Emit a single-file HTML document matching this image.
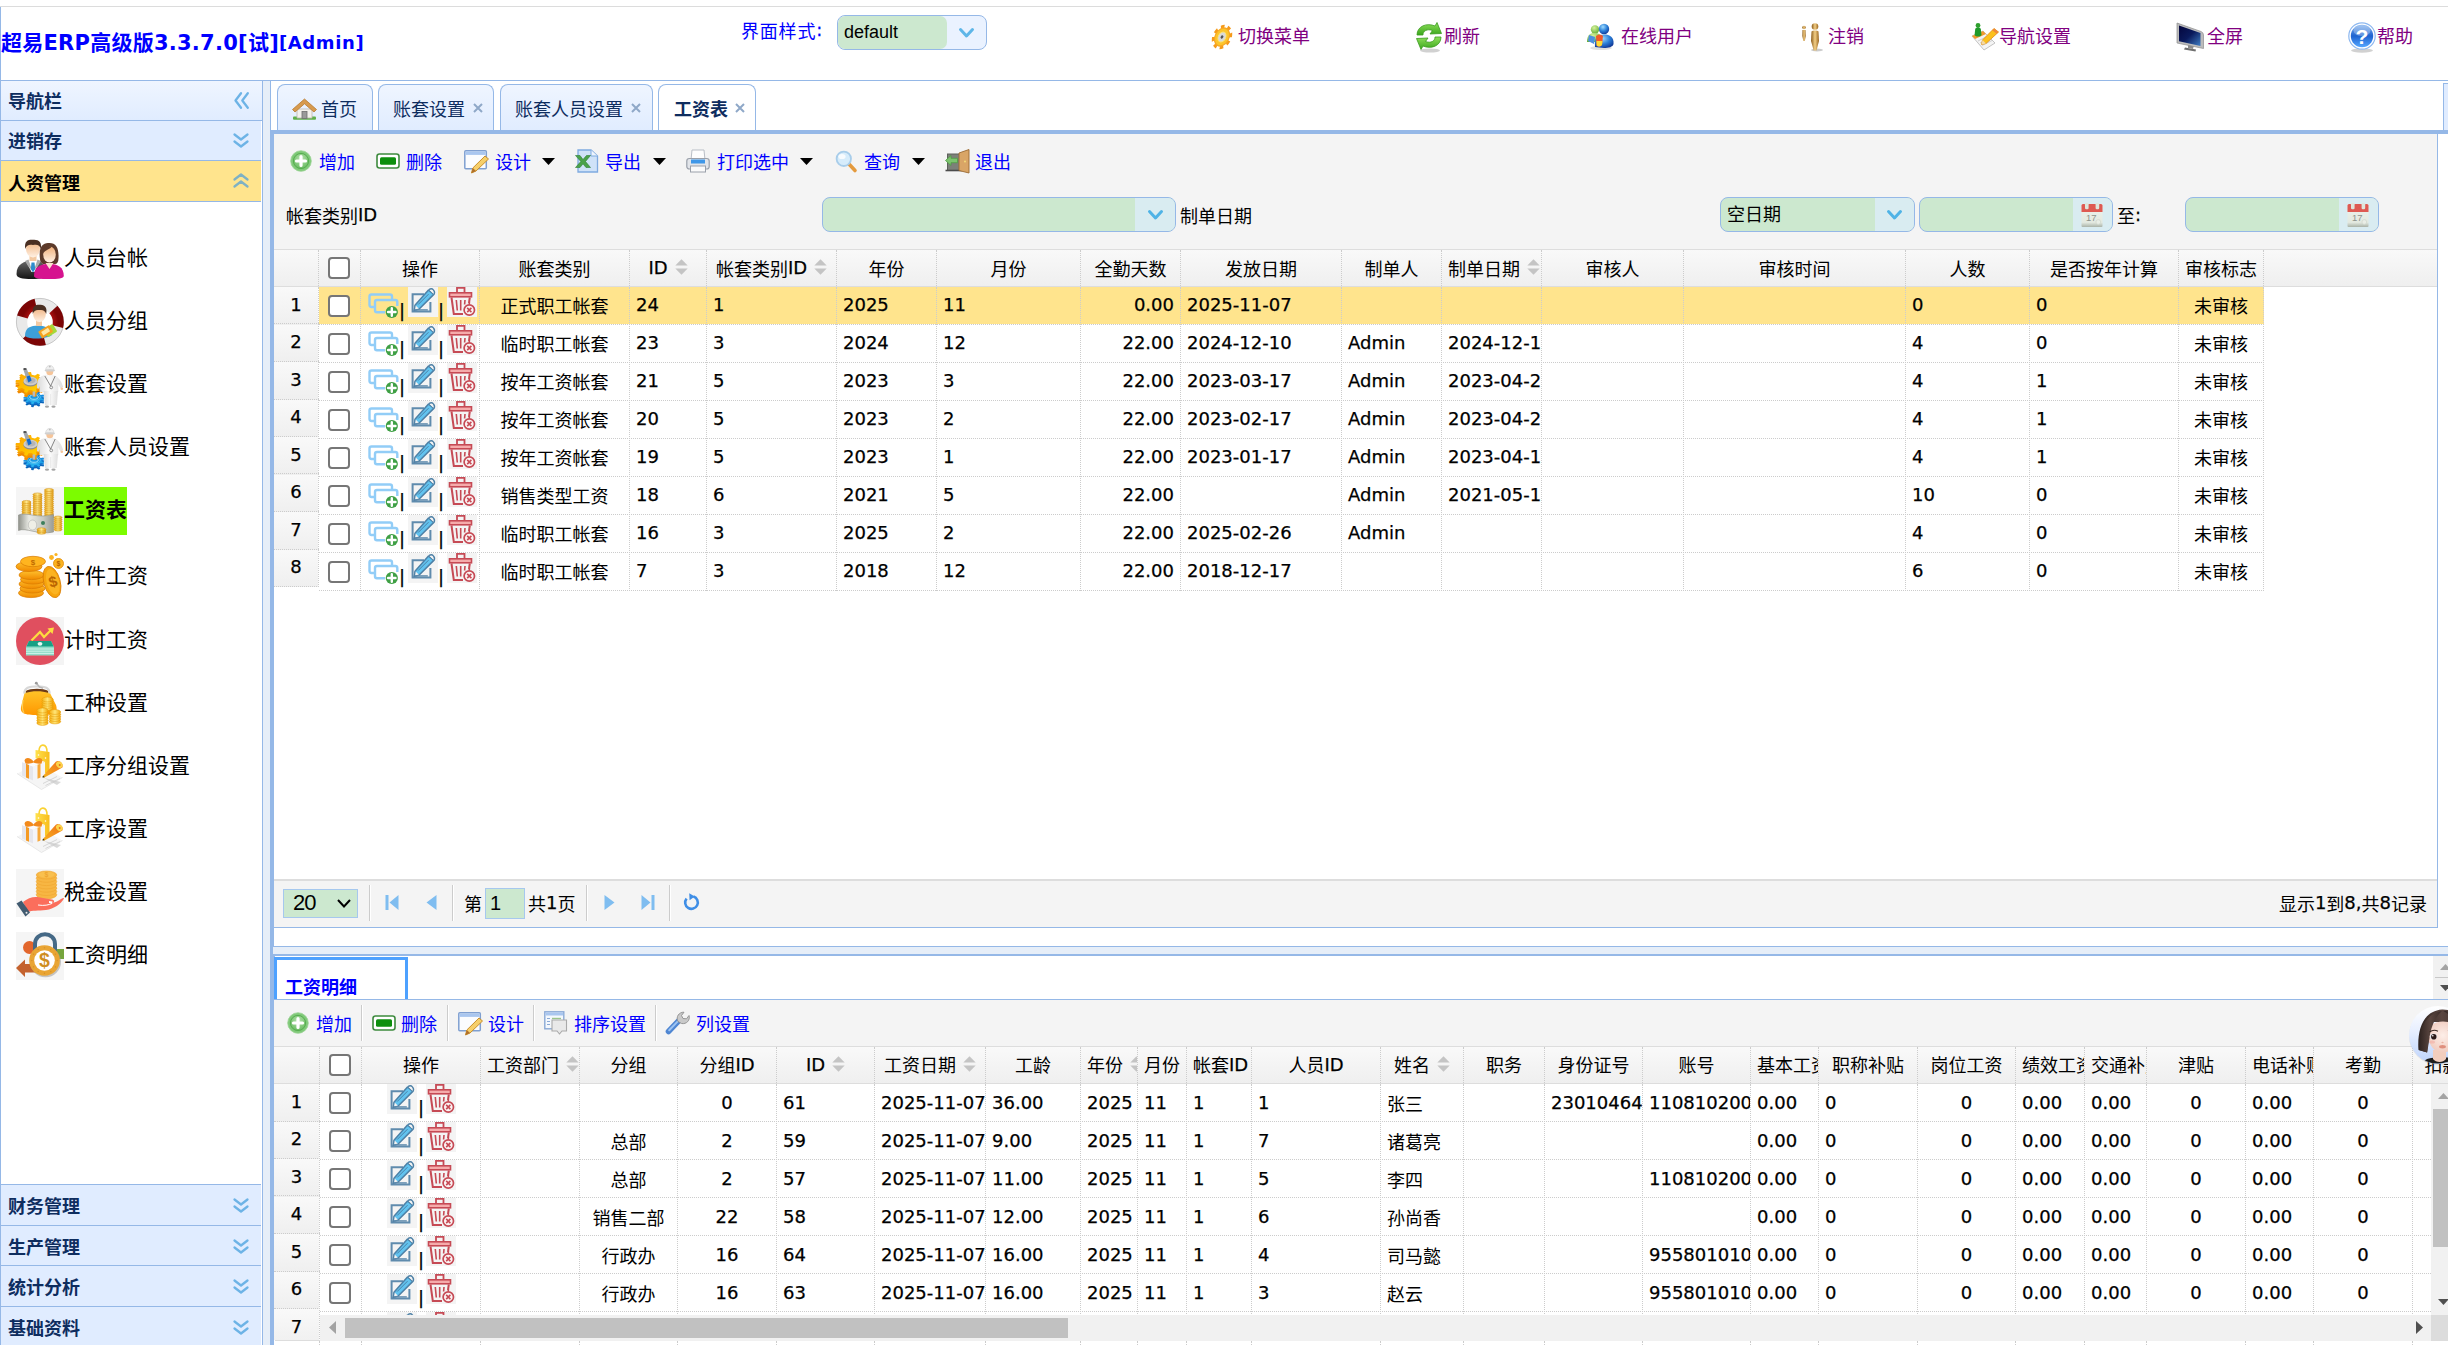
<!DOCTYPE html><html lang="zh"><head><meta charset="utf-8"><title>超易ERP</title><style>
*{box-sizing:border-box;margin:0;padding:0}
html,body{width:2448px;height:1345px;overflow:hidden;background:#fff}
body{position:relative;font-family:"DejaVu Sans","Noto Sans CJK SC",sans-serif;font-size:18px;color:#000;line-height:24px}
div{position:absolute;white-space:nowrap}
svg{position:absolute;overflow:visible}
.t{line-height:24px;height:24px}
.b{font-weight:bold}
.blue{color:#00f}
.pur{color:#800080}
.hd{background:linear-gradient(#EFF5FF,#E0ECFF);border-bottom:1px solid #95B8E7;color:#0E2D5F;font-weight:bold}
.gh{background:linear-gradient(#F9F9F9,#efefef)}
.cb{border-right:1px dotted #ccc}
.vline{width:0;border-left:1px dotted #ccc}
.hline{height:0;border-top:1px dotted #ccc}
.cell{height:24px;line-height:24px;overflow:hidden}
.ck{width:22px;height:22px;border:2px solid #767676;border-radius:4px;background:#fff}
.ar{font-family:"Liberation Sans","Noto Sans CJK SC",sans-serif}
.combo{border:1px solid #95B8E7;border-radius:8px;background:#cce8cf;overflow:hidden}
.cell,.t{-webkit-text-stroke:0.25px}
.c{position:relative;top:2px;-webkit-text-stroke:0}
.c3{position:relative;top:3px;-webkit-text-stroke:0}
.c1{position:relative;top:1px;-webkit-text-stroke:0}
.sep{width:0;border-left:1px solid #ccc;border-right:1px solid #fff}
</style></head><body>
<div style="left:0px;top:6px;width:2448px;height:1px;background:#dcdcdc"></div>
<div style="left:0px;top:7px;width:1px;height:1338px;background:#95B8E7"></div>
<div style="left:0px;top:80px;width:2448px;height:1px;background:#95B8E7"></div>
<div class="b blue" style="left:1px;top:28px;font-size:21px;line-height:30px;letter-spacing:0.25px">超易ERP高级版3.3.7.0[试]</div>
<div class="b blue" style="left:279px;top:30px;font-size:18px;line-height:26px;letter-spacing:0.6px">[Admin]</div>
<div class="t" style="left:741px;top:18px;color:#00f;letter-spacing:0.8px"><span class="c">界面样式</span>:</div>
<div class="combo" style="left:837px;top:15px;width:150px;height:35px;background:#eaf2ff"><div style="left:0;top:0;width:109px;height:33px;background:#cce8cf;border-radius:7px"></div><div class="ar" style="left:6px;top:4px;line-height:24px;font-size:18px">default</div><svg style="left:121px;top:12px" width="15" height="10" viewBox="0 0 15 10" ><path d="M1.5 1.5 L7.5 8 L13.5 1.5" fill="none" stroke="#5eb6e8" stroke-width="3" stroke-linecap="round" stroke-linejoin="round"/></svg></div>
<svg style="left:1210px;top:23px" width="24" height="28" viewBox="0 0 24 28" ><g transform="translate(12,14) rotate(28) scale(0.72,1)"><circle r="10.5" fill="none" stroke="#f59a1b" stroke-width="5" stroke-dasharray="4.2 4.05"/><circle r="9.5" fill="#fdc52b"/><circle r="9.5" fill="none" stroke="#f7a823" stroke-width="1.5"/><circle r="5.2" fill="#d9d9d9" stroke="#fbe27a" stroke-width="1"/><circle r="1.8" fill="#555"/></g></svg>
<div class="t" style="left:1238px;top:23px;color:#800080"><span class="c">切换菜单</span></div>
<svg style="left:1415px;top:22px" width="28" height="30" viewBox="0 0 28 30" ><defs><linearGradient id="rg" x1="0" y1="0" x2="0" y2="1"><stop offset="0" stop-color="#8fe05a"/><stop offset="1" stop-color="#3aa61c"/></linearGradient></defs><ellipse cx="15" cy="28.5" rx="10" ry="2" fill="#000" opacity="0.18"/><path d="M2 13 C2 4 12 0.5 20 4 L22 0.5 L26.5 11.5 L15 12 L17.5 8.5 C12 6.5 8 9 8 13 Z" fill="url(#rg)" stroke="#3a9a1e" stroke-width="0.8"/><path d="M26 15 C26 24 16 27.5 8 24 L6 27.5 L1.5 16.5 L13 16 L10.5 19.5 C16 21.5 20 19 20 15 Z" fill="url(#rg)" stroke="#3a9a1e" stroke-width="0.8"/></svg>
<div class="t" style="left:1444px;top:23px;color:#800080"><span class="c">刷新</span></div>
<svg style="left:1586px;top:22px" width="30" height="28" viewBox="0 0 30 28" ><defs><radialGradient id="ub" cx="0.4" cy="0.3" r="0.8"><stop offset="0" stop-color="#9fdcff"/><stop offset="0.5" stop-color="#2b7fd8"/><stop offset="1" stop-color="#0b2a8a"/></radialGradient><radialGradient id="ug" cx="0.4" cy="0.3" r="0.8"><stop offset="0" stop-color="#d6f29a"/><stop offset="1" stop-color="#5aa72b"/></radialGradient></defs><ellipse cx="15" cy="26" rx="11" ry="2" fill="#000" opacity="0.12"/><circle cx="9" cy="7.5" r="4.2" fill="url(#ug)"/><path d="M1 20 C1 12 5 11 9 11 C13 11 16 13 16 20 Z" fill="url(#ug)"/><circle cx="18" cy="7" r="5.2" fill="url(#ub)"/><path d="M9 25 C8 15 12 12.5 18 12.5 C24 12.5 28 15 27.5 22 C27 25 22 26 18 26 Z" fill="url(#ub)"/><path d="M3 13 L9 15 L8 22 L2 19 Z" fill="#4c8fe0"/><path d="M10 14 C13 12 15 12 17 14 L16 23 C14 25 12 25 10.5 23.5 Z" fill="#f15a29"/><path d="M10.5 19 L16.5 19 L16 23 C14 25 12 25 10.7 23.5 Z" fill="#fdd835"/></svg>
<div class="t" style="left:1621px;top:23px;color:#800080"><span class="c">在线用户</span></div>
<svg style="left:1800px;top:22px" width="24" height="30" viewBox="0 0 24 30" ><defs><linearGradient id="lg" x1="0" y1="0" x2="1" y2="0"><stop offset="0" stop-color="#8a5a1a"/><stop offset="0.5" stop-color="#f3cf86"/><stop offset="1" stop-color="#9a651f"/></linearGradient></defs><ellipse cx="17" cy="28" rx="6" ry="1.4" fill="#000" opacity="0.2"/><circle cx="4" cy="5.5" r="1.8" fill="url(#lg)"/><path d="M2.5 8 H5.5 L5.8 14 L4.8 19 H3.4 L2.3 14 Z" fill="url(#lg)"/><circle cx="15" cy="4.5" r="3.3" fill="url(#lg)"/><path d="M11.5 9.5 C13 8.3 17 8.3 18.5 9.5 L19 19 L16.5 28.5 H13.7 L11 19 Z" fill="url(#lg)"/></svg>
<div class="t" style="left:1828px;top:23px;color:#800080"><span class="c">注销</span></div>
<svg style="left:1971px;top:22px" width="29" height="30" viewBox="0 0 29 30" ><path d="M1 14 L12 9 L24 21 L13 28 Z" fill="#f4f4f4" stroke="#b5b5b5" stroke-width="0.8"/><path d="M1 14 L12 9 L15 12 L4 17 Z" fill="#f29a2e"/><path d="M7 19 L17 14 M9 21 L19 16 M11 23.5 L21 18.5" stroke="#c9c9c9" stroke-width="0.9"/><circle cx="7" cy="3.5" r="2.4" fill="#2fa12f"/><path d="M4.2 7 C5 5 9 5 9.8 7 L10.5 13 C9 15 5 15 3.6 13 Z" fill="#1f9a2a"/><path d="M23 6.5 L27.5 10 L15 21.5 L10.5 22.5 L11.5 18 Z" fill="#fbc11d" stroke="#e08a12" stroke-width="0.8"/><path d="M11.5 18 L15 21.5 L10.5 22.5 Z" fill="#f3d9a6"/><path d="M23 6.5 L27.5 10 L25.7 11.7 L21.2 8.2 Z" fill="#f0883a"/></svg>
<div class="t" style="left:1999px;top:23px;color:#800080"><span class="c">导航设置</span></div>
<svg style="left:2176px;top:22px" width="29" height="31" viewBox="0 0 29 31" ><defs><linearGradient id="sg" x1="0" y1="0" x2="1" y2="1"><stop offset="0" stop-color="#05063c"/><stop offset="0.5" stop-color="#0a1a5c"/><stop offset="1" stop-color="#3f7ec4"/></linearGradient></defs><path d="M9 25.5 L20 27.5 L19.5 29.5 L8 27.5 Z" fill="#6f6f6f"/><path d="M12 22 L18 23 L17 27 L12 26 Z" fill="#8c8c8c"/><path d="M1 1 L25 9.5 Q27.5 10.5 27.5 13 L27.5 26.5 L1 21 Z" fill="#bcbcbc" stroke="#8d8d8d" stroke-width="0.7"/><path d="M3 3.5 L24.5 11 L24.5 24 L3 19.2 Z" fill="url(#sg)"/></svg>
<div class="t" style="left:2207px;top:23px;color:#800080"><span class="c">全屏</span></div>
<svg style="left:2348px;top:22px" width="28" height="32" viewBox="0 0 28 32" ><defs><linearGradient id="hg" x1="0" y1="0" x2="0" y2="1"><stop offset="0" stop-color="#7fb0ee"/><stop offset="0.5" stop-color="#1e63d0"/><stop offset="1" stop-color="#55a6ff"/></linearGradient></defs><ellipse cx="14" cy="28.5" rx="11" ry="2.2" fill="#000" opacity="0.18"/><circle cx="14" cy="14" r="13.2" fill="#fff" stroke="#8db8f0" stroke-width="1.2"/><circle cx="14" cy="14" r="11.2" fill="url(#hg)"/><ellipse cx="14" cy="8.5" rx="8.5" ry="5.5" fill="#fff" opacity="0.28"/><text x="14" y="21.5" text-anchor="middle" font-family="Liberation Sans,sans-serif" font-weight="bold" font-size="21" fill="#fff">?</text></svg>
<div class="t" style="left:2377px;top:23px;color:#800080"><span class="c">帮助</span></div>
<div style="left:262px;top:81px;width:1px;height:1264px;background:#95B8E7"></div>
<div class="hd" style="left:1px;top:81px;width:261px;height:40px;"></div>
<div class="t" style="left:8px;top:88px;color:#0E2D5F;font-weight:bold"><span class="c">导航栏</span></div>
<svg style="left:234px;top:92px" width="16" height="17" viewBox="0 0 16 17" ><path d="M7 1.2 L1.5 8.5 L7 15.8 M13.8 1.2 L8.3 8.5 L13.8 15.8" fill="none" stroke="#6db3e6" stroke-width="2.3" stroke-linecap="round" stroke-linejoin="round"/></svg>
<div style="left:1px;top:121px;width:260px;height:40px;background:#E0ECFF;border-bottom:1px solid #95B8E7"></div>
<div class="t" style="left:8px;top:128px;color:#0E2D5F;font-weight:bold"><span class="c">进销存</span></div>
<svg style="left:233px;top:133px" width="16" height="15" viewBox="0 0 16 15" ><path d="M1.5 1.5 L8 6.5 L14.5 1.5 M1.5 8.5 L8 13.5 L14.5 8.5" fill="none" stroke="#6db3e6" stroke-width="2.3" stroke-linecap="round" stroke-linejoin="round"/></svg>
<div style="left:1px;top:161px;width:260px;height:41px;background:#ffe48d;border-bottom:1px solid #95B8E7"></div>
<div class="t" style="left:8px;top:170px;color:#000;font-weight:bold"><span class="c">人资管理</span></div>
<svg style="left:233px;top:173px" width="16" height="15" viewBox="0 0 16 15" ><path d="M1.5 6.5 L8 1.5 L14.5 6.5 M1.5 13.5 L8 8.5 L14.5 13.5" fill="none" stroke="#7fb1c4" stroke-width="2.3" stroke-linecap="round" stroke-linejoin="round"/></svg>
<svg style="left:16px;top:234px" width="48" height="48" viewBox="0 0 48 48" ><defs><linearGradient id="sk" x1="0" y1="0" x2="0" y2="1"><stop offset="0" stop-color="#f0b07a"/><stop offset="1" stop-color="#fff1e4"/></linearGradient><linearGradient id="suit" x1="0" y1="0" x2="0" y2="1"><stop offset="0" stop-color="#6b6b6b"/><stop offset="1" stop-color="#141414"/></linearGradient></defs><path d="M0.5 40 C0.5 30 8 27 17 26 C26 27 30 30 30 40 C30 44 24 45 16 45 C6 45 0.5 44 0.5 40 Z" fill="url(#suit)"/><path d="M10 27 L17 25 L24 27 L18.5 38 L15.5 38 Z" fill="#fff"/><path d="M9 27 L12.5 25.5 L16 36 L12 32 Z M25 27 L21.5 25.5 L18 36 L22 32 Z" fill="#a9a9a9"/><path d="M15.5 28.5 H18.5 L19.2 35 L17 38.5 L14.8 35 Z" fill="#2d8ccc"/><rect x="13.5" y="21" width="7" height="6" fill="#f3c9a2"/><ellipse cx="17" cy="15" rx="7" ry="8.5" fill="url(#sk)"/><path d="M9.2 15 C8 6 13 5.5 17.5 5.8 C23 5.5 26 8.5 24.8 15 C24 11 21 10 17 11 C13 10.5 10.5 11 9.2 15 Z" fill="#4a2f22"/><path d="M24 25 C22 10 29 9 33.5 9 C40 9 43 14 42.5 24 C42.5 28 41 30 39 30 L27 30 C25 29 24 27 24 25 Z" fill="#5c3a2a"/><path d="M18 42 C18 33 24 30.5 33 29.5 C42 30.5 47.8 33 47.8 42 C47.8 44.5 42 45 33 45 C24 45 18 44.5 18 42 Z" fill="#d6138f"/><path d="M29.5 29 L33.5 35 L37.5 29 Z" fill="#fbe3cf"/><ellipse cx="33.5" cy="20.5" rx="6.3" ry="8" fill="url(#sk)"/><path d="M27 19 C27 12 31 11 36 12.5 C34 15 30 16 27 19 Z" fill="#5c3a2a"/></svg>
<div style="left:64px;top:243px;font-size:21px;line-height:30px">人员台帐</div>
<svg style="left:16px;top:298px" width="48" height="48" viewBox="0 0 48 48" ><defs><radialGradient id="lr" cx="0.5" cy="0.5" r="0.5"><stop offset="0.5" stop-color="#c41616"/><stop offset="1" stop-color="#7c0505"/></radialGradient><linearGradient id="sk2" x1="0" y1="0" x2="0" y2="1"><stop offset="0" stop-color="#efb07c"/><stop offset="1" stop-color="#fff1e4"/></linearGradient></defs><circle cx="24" cy="24" r="18.3" fill="none" stroke="#e9e9e9" stroke-width="11"/><circle cx="24" cy="24" r="23.6" fill="none" stroke="#bdbdbd" stroke-width="0.8"/><circle cx="24" cy="24" r="18.3" fill="none" stroke="url(#lr)" stroke-width="11" stroke-dasharray="19.16 19.16" stroke-dashoffset="14.4"/><path d="M9 38 C9 29 15 28 22 27.5 C30 28 36 30 36 37 C32 41 14 42 9 38 Z" fill="#3d9fd8"/><rect x="20" y="22" width="6" height="6" fill="#f3c9a2"/><ellipse cx="23.5" cy="16.5" rx="6.3" ry="7.5" fill="url(#sk2)"/><path d="M16.8 16 C15.5 7 21 6.5 24 6.8 C29 6.5 31.5 10 30.2 16 C29 12.5 27 11.5 23.5 12 C20 11.5 18 12.5 16.8 16 Z" fill="#4a2f22"/><g transform="rotate(-32 31 34)"><rect x="29" y="30" width="11" height="9" rx="1" fill="#a6d93a"/><rect x="23.5" y="29" width="13" height="8" rx="1" fill="#f6a21e"/><rect x="26" y="31" width="8" height="4" fill="#fde9a8"/></g></svg>
<div style="left:64px;top:306px;font-size:21px;line-height:30px">人员分组</div>
<svg style="left:16px;top:361px" width="48" height="48" viewBox="0 0 48 48" ><defs><linearGradient id="og" x1="0" y1="0" x2="1" y2="1"><stop offset="0" stop-color="#ffa300"/><stop offset="1" stop-color="#ffd800"/></linearGradient><linearGradient id="bg2" x1="0" y1="0" x2="0" y2="1"><stop offset="0" stop-color="#0a74d4"/><stop offset="1" stop-color="#2cbcf2"/></linearGradient><linearGradient id="wh" x1="0" y1="0" x2="1" y2="0"><stop offset="0" stop-color="#d9d9d9"/><stop offset="0.45" stop-color="#fbfbfb"/><stop offset="1" stop-color="#dedede"/></linearGradient></defs><g transform="translate(18,39.7) scale(1,0.62)"><path d="M7.7 1.2 L10.2 2.4 L9.5 4.5 L6.7 3.9 L5.2 5.9 L6.3 8.4 L4.4 9.5 L2.6 7.3 L0.2 7.8 L-0.6 10.5 L-2.8 10.1 L-2.7 7.3 L-4.9 6.1 L-7.2 7.6 L-8.6 6.0 L-6.8 3.9 L-7.6 1.5 L-10.4 1.2 L-10.5 -1.0 L-7.7 -1.4 L-6.8 -3.7 L-8.8 -5.8 L-7.4 -7.5 L-5.0 -6.0 L-2.8 -7.3 L-3.0 -10.1 L-0.8 -10.5 L0.0 -7.8 L2.5 -7.4 L4.2 -9.6 L6.1 -8.6 L5.0 -6.0 L6.7 -4.1 L9.4 -4.7 L10.2 -2.6 L7.7 -1.3 Z" fill="#0a63b8"/></g><g transform="translate(18,38.1) scale(1,0.62)"><path d="M7.7 1.2 L10.2 2.4 L9.5 4.5 L6.7 3.9 L5.2 5.9 L6.3 8.4 L4.4 9.5 L2.6 7.3 L0.2 7.8 L-0.6 10.5 L-2.8 10.1 L-2.7 7.3 L-4.9 6.1 L-7.2 7.6 L-8.6 6.0 L-6.8 3.9 L-7.6 1.5 L-10.4 1.2 L-10.5 -1.0 L-7.7 -1.4 L-6.8 -3.7 L-8.8 -5.8 L-7.4 -7.5 L-5.0 -6.0 L-2.8 -7.3 L-3.0 -10.1 L-0.8 -10.5 L0.0 -7.8 L2.5 -7.4 L4.2 -9.6 L6.1 -8.6 L5.0 -6.0 L6.7 -4.1 L9.4 -4.7 L10.2 -2.6 L7.7 -1.3 Z" fill="#0e78d0"/></g><g transform="translate(18,36.5) scale(1,0.62)"><path d="M7.7 1.2 L10.2 2.4 L9.5 4.5 L6.7 3.9 L5.2 5.9 L6.3 8.4 L4.4 9.5 L2.6 7.3 L0.2 7.8 L-0.6 10.5 L-2.8 10.1 L-2.7 7.3 L-4.9 6.1 L-7.2 7.6 L-8.6 6.0 L-6.8 3.9 L-7.6 1.5 L-10.4 1.2 L-10.5 -1.0 L-7.7 -1.4 L-6.8 -3.7 L-8.8 -5.8 L-7.4 -7.5 L-5.0 -6.0 L-2.8 -7.3 L-3.0 -10.1 L-0.8 -10.5 L0.0 -7.8 L2.5 -7.4 L4.2 -9.6 L6.1 -8.6 L5.0 -6.0 L6.7 -4.1 L9.4 -4.7 L10.2 -2.6 L7.7 -1.3 Z" fill="url(#bg2)"/></g><ellipse cx="18" cy="36" rx="4.2" ry="2.3" fill="none" stroke="#9be0fa" stroke-width="1"/><ellipse cx="18" cy="36" rx="6.4" ry="3.6" fill="none" stroke="#5cc9f5" stroke-width="0.7"/><g transform="translate(14,26.0) scale(1,0.72)"><path d="M10.5 3.3 L13.4 5.4 L12.0 8.1 L8.6 6.9 L6.0 9.2 L6.8 12.8 L4.0 13.9 L2.1 10.8 L-1.4 10.9 L-3.0 14.2 L-5.9 13.2 L-5.3 9.6 L-8.1 7.5 L-11.4 8.9 L-13.0 6.4 L-10.3 4.0 L-11.0 0.5 L-14.5 -0.5 L-14.1 -3.5 L-10.4 -3.5 L-8.8 -6.6 L-10.8 -9.7 L-8.5 -11.7 L-5.7 -9.4 L-2.4 -10.7 L-2.0 -14.4 L1.0 -14.5 L1.7 -10.9 L5.0 -9.8 L7.7 -12.3 L10.1 -10.4 L8.3 -7.2 L10.1 -4.3 L13.8 -4.5 L14.4 -1.5 L11.0 -0.2 Z" fill="#f08a00"/></g><g transform="translate(14,23.7) scale(1,0.72)"><path d="M10.5 3.3 L13.4 5.4 L12.0 8.1 L8.6 6.9 L6.0 9.2 L6.8 12.8 L4.0 13.9 L2.1 10.8 L-1.4 10.9 L-3.0 14.2 L-5.9 13.2 L-5.3 9.6 L-8.1 7.5 L-11.4 8.9 L-13.0 6.4 L-10.3 4.0 L-11.0 0.5 L-14.5 -0.5 L-14.1 -3.5 L-10.4 -3.5 L-8.8 -6.6 L-10.8 -9.7 L-8.5 -11.7 L-5.7 -9.4 L-2.4 -10.7 L-2.0 -14.4 L1.0 -14.5 L1.7 -10.9 L5.0 -9.8 L7.7 -12.3 L10.1 -10.4 L8.3 -7.2 L10.1 -4.3 L13.8 -4.5 L14.4 -1.5 L11.0 -0.2 Z" fill="#f79c00"/></g><g transform="translate(14,21.5) scale(1,0.72)"><path d="M10.5 3.3 L13.4 5.4 L12.0 8.1 L8.6 6.9 L6.0 9.2 L6.8 12.8 L4.0 13.9 L2.1 10.8 L-1.4 10.9 L-3.0 14.2 L-5.9 13.2 L-5.3 9.6 L-8.1 7.5 L-11.4 8.9 L-13.0 6.4 L-10.3 4.0 L-11.0 0.5 L-14.5 -0.5 L-14.1 -3.5 L-10.4 -3.5 L-8.8 -6.6 L-10.8 -9.7 L-8.5 -11.7 L-5.7 -9.4 L-2.4 -10.7 L-2.0 -14.4 L1.0 -14.5 L1.7 -10.9 L5.0 -9.8 L7.7 -12.3 L10.1 -10.4 L8.3 -7.2 L10.1 -4.3 L13.8 -4.5 L14.4 -1.5 L11.0 -0.2 Z" fill="url(#og)"/></g><ellipse cx="14.5" cy="21.2" rx="7" ry="4.3" fill="#8d8d8d"/><ellipse cx="14.5" cy="20" rx="7" ry="4.3" fill="#cdcdcd"/><ellipse cx="14.5" cy="19.6" rx="5" ry="2.8" fill="#b5b5b5"/><path d="M7.3 8.5 L10.6 7.5 L15.2 19 L11.6 21 Z" fill="#a3a7ab"/><path d="M10.6 15.5 L13.9 14.6 L15.6 19.6 L12.4 21.6 Z" fill="#0e6ad0"/><ellipse cx="8.9" cy="8" rx="1.7" ry="1" fill="#4a4a4a"/><rect x="16.6" y="30.5" width="2.6" height="5" fill="#b9b9b9"/><path d="M21 27 C20.5 17 25 13.5 33 13.5 C41.5 13.5 45 19 47.2 26 L44.5 27.5 L42.3 23.5 L42.3 31 L23.5 31 L23.5 25 L22.5 28 Z" fill="url(#wh)"/><path d="M27.5 30 H42 L40.8 44 H29 Z" fill="url(#wh)"/><path d="M34.6 33 V44" stroke="#e3e3e3" stroke-width="0.8"/><ellipse cx="31" cy="45.6" rx="2.1" ry="1.2" fill="#a5a5a5"/><ellipse cx="37.5" cy="45.6" rx="2.1" ry="1.2" fill="#a5a5a5"/><circle cx="33.8" cy="10.8" r="3.5" fill="#f6c59a"/><path d="M29.6 9.3 C29.6 2.8 38 2.8 38 9.3 Z" fill="#efefef" stroke="#c5c5c5" stroke-width="0.5"/><ellipse cx="33.8" cy="9.4" rx="5.2" ry="1.2" fill="#d0d0d0"/><circle cx="33.8" cy="5.6" r="0.9" fill="#bdbdbd"/><path d="M28.8 15 L34.6 25 L39.2 15" fill="none" stroke="#6a6a6a" stroke-width="0.8"/><circle cx="35.2" cy="26.4" r="1.4" fill="none" stroke="#777" stroke-width="0.8"/><circle cx="45.8" cy="27.8" r="1.3" fill="#f6c59a"/></svg>
<div style="left:64px;top:369px;font-size:21px;line-height:30px">账套设置</div>
<svg style="left:16px;top:424px" width="48" height="48" viewBox="0 0 48 48" ><defs><linearGradient id="og" x1="0" y1="0" x2="1" y2="1"><stop offset="0" stop-color="#ffa300"/><stop offset="1" stop-color="#ffd800"/></linearGradient><linearGradient id="bg2" x1="0" y1="0" x2="0" y2="1"><stop offset="0" stop-color="#0a74d4"/><stop offset="1" stop-color="#2cbcf2"/></linearGradient><linearGradient id="wh" x1="0" y1="0" x2="1" y2="0"><stop offset="0" stop-color="#d9d9d9"/><stop offset="0.45" stop-color="#fbfbfb"/><stop offset="1" stop-color="#dedede"/></linearGradient></defs><g transform="translate(18,39.7) scale(1,0.62)"><path d="M7.7 1.2 L10.2 2.4 L9.5 4.5 L6.7 3.9 L5.2 5.9 L6.3 8.4 L4.4 9.5 L2.6 7.3 L0.2 7.8 L-0.6 10.5 L-2.8 10.1 L-2.7 7.3 L-4.9 6.1 L-7.2 7.6 L-8.6 6.0 L-6.8 3.9 L-7.6 1.5 L-10.4 1.2 L-10.5 -1.0 L-7.7 -1.4 L-6.8 -3.7 L-8.8 -5.8 L-7.4 -7.5 L-5.0 -6.0 L-2.8 -7.3 L-3.0 -10.1 L-0.8 -10.5 L0.0 -7.8 L2.5 -7.4 L4.2 -9.6 L6.1 -8.6 L5.0 -6.0 L6.7 -4.1 L9.4 -4.7 L10.2 -2.6 L7.7 -1.3 Z" fill="#0a63b8"/></g><g transform="translate(18,38.1) scale(1,0.62)"><path d="M7.7 1.2 L10.2 2.4 L9.5 4.5 L6.7 3.9 L5.2 5.9 L6.3 8.4 L4.4 9.5 L2.6 7.3 L0.2 7.8 L-0.6 10.5 L-2.8 10.1 L-2.7 7.3 L-4.9 6.1 L-7.2 7.6 L-8.6 6.0 L-6.8 3.9 L-7.6 1.5 L-10.4 1.2 L-10.5 -1.0 L-7.7 -1.4 L-6.8 -3.7 L-8.8 -5.8 L-7.4 -7.5 L-5.0 -6.0 L-2.8 -7.3 L-3.0 -10.1 L-0.8 -10.5 L0.0 -7.8 L2.5 -7.4 L4.2 -9.6 L6.1 -8.6 L5.0 -6.0 L6.7 -4.1 L9.4 -4.7 L10.2 -2.6 L7.7 -1.3 Z" fill="#0e78d0"/></g><g transform="translate(18,36.5) scale(1,0.62)"><path d="M7.7 1.2 L10.2 2.4 L9.5 4.5 L6.7 3.9 L5.2 5.9 L6.3 8.4 L4.4 9.5 L2.6 7.3 L0.2 7.8 L-0.6 10.5 L-2.8 10.1 L-2.7 7.3 L-4.9 6.1 L-7.2 7.6 L-8.6 6.0 L-6.8 3.9 L-7.6 1.5 L-10.4 1.2 L-10.5 -1.0 L-7.7 -1.4 L-6.8 -3.7 L-8.8 -5.8 L-7.4 -7.5 L-5.0 -6.0 L-2.8 -7.3 L-3.0 -10.1 L-0.8 -10.5 L0.0 -7.8 L2.5 -7.4 L4.2 -9.6 L6.1 -8.6 L5.0 -6.0 L6.7 -4.1 L9.4 -4.7 L10.2 -2.6 L7.7 -1.3 Z" fill="url(#bg2)"/></g><ellipse cx="18" cy="36" rx="4.2" ry="2.3" fill="none" stroke="#9be0fa" stroke-width="1"/><ellipse cx="18" cy="36" rx="6.4" ry="3.6" fill="none" stroke="#5cc9f5" stroke-width="0.7"/><g transform="translate(14,26.0) scale(1,0.72)"><path d="M10.5 3.3 L13.4 5.4 L12.0 8.1 L8.6 6.9 L6.0 9.2 L6.8 12.8 L4.0 13.9 L2.1 10.8 L-1.4 10.9 L-3.0 14.2 L-5.9 13.2 L-5.3 9.6 L-8.1 7.5 L-11.4 8.9 L-13.0 6.4 L-10.3 4.0 L-11.0 0.5 L-14.5 -0.5 L-14.1 -3.5 L-10.4 -3.5 L-8.8 -6.6 L-10.8 -9.7 L-8.5 -11.7 L-5.7 -9.4 L-2.4 -10.7 L-2.0 -14.4 L1.0 -14.5 L1.7 -10.9 L5.0 -9.8 L7.7 -12.3 L10.1 -10.4 L8.3 -7.2 L10.1 -4.3 L13.8 -4.5 L14.4 -1.5 L11.0 -0.2 Z" fill="#f08a00"/></g><g transform="translate(14,23.7) scale(1,0.72)"><path d="M10.5 3.3 L13.4 5.4 L12.0 8.1 L8.6 6.9 L6.0 9.2 L6.8 12.8 L4.0 13.9 L2.1 10.8 L-1.4 10.9 L-3.0 14.2 L-5.9 13.2 L-5.3 9.6 L-8.1 7.5 L-11.4 8.9 L-13.0 6.4 L-10.3 4.0 L-11.0 0.5 L-14.5 -0.5 L-14.1 -3.5 L-10.4 -3.5 L-8.8 -6.6 L-10.8 -9.7 L-8.5 -11.7 L-5.7 -9.4 L-2.4 -10.7 L-2.0 -14.4 L1.0 -14.5 L1.7 -10.9 L5.0 -9.8 L7.7 -12.3 L10.1 -10.4 L8.3 -7.2 L10.1 -4.3 L13.8 -4.5 L14.4 -1.5 L11.0 -0.2 Z" fill="#f79c00"/></g><g transform="translate(14,21.5) scale(1,0.72)"><path d="M10.5 3.3 L13.4 5.4 L12.0 8.1 L8.6 6.9 L6.0 9.2 L6.8 12.8 L4.0 13.9 L2.1 10.8 L-1.4 10.9 L-3.0 14.2 L-5.9 13.2 L-5.3 9.6 L-8.1 7.5 L-11.4 8.9 L-13.0 6.4 L-10.3 4.0 L-11.0 0.5 L-14.5 -0.5 L-14.1 -3.5 L-10.4 -3.5 L-8.8 -6.6 L-10.8 -9.7 L-8.5 -11.7 L-5.7 -9.4 L-2.4 -10.7 L-2.0 -14.4 L1.0 -14.5 L1.7 -10.9 L5.0 -9.8 L7.7 -12.3 L10.1 -10.4 L8.3 -7.2 L10.1 -4.3 L13.8 -4.5 L14.4 -1.5 L11.0 -0.2 Z" fill="url(#og)"/></g><ellipse cx="14.5" cy="21.2" rx="7" ry="4.3" fill="#8d8d8d"/><ellipse cx="14.5" cy="20" rx="7" ry="4.3" fill="#cdcdcd"/><ellipse cx="14.5" cy="19.6" rx="5" ry="2.8" fill="#b5b5b5"/><path d="M7.3 8.5 L10.6 7.5 L15.2 19 L11.6 21 Z" fill="#a3a7ab"/><path d="M10.6 15.5 L13.9 14.6 L15.6 19.6 L12.4 21.6 Z" fill="#0e6ad0"/><ellipse cx="8.9" cy="8" rx="1.7" ry="1" fill="#4a4a4a"/><rect x="16.6" y="30.5" width="2.6" height="5" fill="#b9b9b9"/><path d="M21 27 C20.5 17 25 13.5 33 13.5 C41.5 13.5 45 19 47.2 26 L44.5 27.5 L42.3 23.5 L42.3 31 L23.5 31 L23.5 25 L22.5 28 Z" fill="url(#wh)"/><path d="M27.5 30 H42 L40.8 44 H29 Z" fill="url(#wh)"/><path d="M34.6 33 V44" stroke="#e3e3e3" stroke-width="0.8"/><ellipse cx="31" cy="45.6" rx="2.1" ry="1.2" fill="#a5a5a5"/><ellipse cx="37.5" cy="45.6" rx="2.1" ry="1.2" fill="#a5a5a5"/><circle cx="33.8" cy="10.8" r="3.5" fill="#f6c59a"/><path d="M29.6 9.3 C29.6 2.8 38 2.8 38 9.3 Z" fill="#efefef" stroke="#c5c5c5" stroke-width="0.5"/><ellipse cx="33.8" cy="9.4" rx="5.2" ry="1.2" fill="#d0d0d0"/><circle cx="33.8" cy="5.6" r="0.9" fill="#bdbdbd"/><path d="M28.8 15 L34.6 25 L39.2 15" fill="none" stroke="#6a6a6a" stroke-width="0.8"/><circle cx="35.2" cy="26.4" r="1.4" fill="none" stroke="#777" stroke-width="0.8"/><circle cx="45.8" cy="27.8" r="1.3" fill="#f6c59a"/></svg>
<div style="left:64px;top:432px;font-size:21px;line-height:30px">账套人员设置</div>
<svg style="left:16px;top:487px" width="48" height="48" viewBox="0 0 48 48" ><defs><linearGradient id="cg" x1="0" y1="0" x2="1" y2="0"><stop offset="0" stop-color="#e5a21a"/><stop offset="0.5" stop-color="#ffe78a"/><stop offset="1" stop-color="#dd9612"/></linearGradient><linearGradient id="bill" x1="0" y1="0" x2="1" y2="0"><stop offset="0" stop-color="#8f918a"/><stop offset="0.3" stop-color="#e9eae4"/><stop offset="0.7" stop-color="#c9cbc3"/><stop offset="1" stop-color="#9a9c95"/></linearGradient></defs><rect width="48" height="48" fill="#f5f5f5"/><ellipse cx="33" cy="30.0" rx="4.6" ry="1.6" fill="url(#cg)" stroke="#d4930f" stroke-width="0.5"/><ellipse cx="33" cy="28.1" rx="4.6" ry="1.6" fill="url(#cg)" stroke="#d4930f" stroke-width="0.5"/><ellipse cx="33" cy="26.1" rx="4.6" ry="1.6" fill="url(#cg)" stroke="#d4930f" stroke-width="0.5"/><ellipse cx="33" cy="24.2" rx="4.6" ry="1.6" fill="url(#cg)" stroke="#d4930f" stroke-width="0.5"/><ellipse cx="33" cy="22.3" rx="4.6" ry="1.6" fill="url(#cg)" stroke="#d4930f" stroke-width="0.5"/><ellipse cx="33" cy="20.4" rx="4.6" ry="1.6" fill="url(#cg)" stroke="#d4930f" stroke-width="0.5"/><ellipse cx="33" cy="18.4" rx="4.6" ry="1.6" fill="url(#cg)" stroke="#d4930f" stroke-width="0.5"/><ellipse cx="33" cy="16.5" rx="4.6" ry="1.6" fill="url(#cg)" stroke="#d4930f" stroke-width="0.5"/><ellipse cx="33" cy="14.6" rx="4.6" ry="1.6" fill="url(#cg)" stroke="#d4930f" stroke-width="0.5"/><ellipse cx="33" cy="12.6" rx="4.6" ry="1.6" fill="url(#cg)" stroke="#d4930f" stroke-width="0.5"/><ellipse cx="33" cy="10.7" rx="4.6" ry="1.6" fill="url(#cg)" stroke="#d4930f" stroke-width="0.5"/><ellipse cx="33" cy="8.8" rx="4.6" ry="1.6" fill="url(#cg)" stroke="#d4930f" stroke-width="0.5"/><ellipse cx="33" cy="6.9" rx="4.6" ry="1.6" fill="url(#cg)" stroke="#d4930f" stroke-width="0.5"/><ellipse cx="33" cy="4.9" rx="4.6" ry="1.6" fill="url(#cg)" stroke="#d4930f" stroke-width="0.5"/><ellipse cx="33" cy="3.0" rx="4.6" ry="1.6" fill="url(#cg)" stroke="#d4930f" stroke-width="0.5"/><ellipse cx="21.5" cy="28.0" rx="4.6" ry="1.6" fill="url(#cg)" stroke="#d4930f" stroke-width="0.5"/><ellipse cx="21.5" cy="26.1" rx="4.6" ry="1.6" fill="url(#cg)" stroke="#d4930f" stroke-width="0.5"/><ellipse cx="21.5" cy="24.3" rx="4.6" ry="1.6" fill="url(#cg)" stroke="#d4930f" stroke-width="0.5"/><ellipse cx="21.5" cy="22.4" rx="4.6" ry="1.6" fill="url(#cg)" stroke="#d4930f" stroke-width="0.5"/><ellipse cx="21.5" cy="20.5" rx="4.6" ry="1.6" fill="url(#cg)" stroke="#d4930f" stroke-width="0.5"/><ellipse cx="21.5" cy="18.7" rx="4.6" ry="1.6" fill="url(#cg)" stroke="#d4930f" stroke-width="0.5"/><ellipse cx="21.5" cy="16.8" rx="4.6" ry="1.6" fill="url(#cg)" stroke="#d4930f" stroke-width="0.5"/><ellipse cx="21.5" cy="15.0" rx="4.6" ry="1.6" fill="url(#cg)" stroke="#d4930f" stroke-width="0.5"/><ellipse cx="21.5" cy="13.1" rx="4.6" ry="1.6" fill="url(#cg)" stroke="#d4930f" stroke-width="0.5"/><ellipse cx="21.5" cy="11.2" rx="4.6" ry="1.6" fill="url(#cg)" stroke="#d4930f" stroke-width="0.5"/><ellipse cx="21.5" cy="9.4" rx="4.6" ry="1.6" fill="url(#cg)" stroke="#d4930f" stroke-width="0.5"/><ellipse cx="21.5" cy="7.5" rx="4.6" ry="1.6" fill="url(#cg)" stroke="#d4930f" stroke-width="0.5"/><ellipse cx="10.5" cy="28.0" rx="4.6" ry="1.6" fill="url(#cg)" stroke="#d4930f" stroke-width="0.5"/><ellipse cx="10.5" cy="26.1" rx="4.6" ry="1.6" fill="url(#cg)" stroke="#d4930f" stroke-width="0.5"/><ellipse cx="10.5" cy="24.3" rx="4.6" ry="1.6" fill="url(#cg)" stroke="#d4930f" stroke-width="0.5"/><ellipse cx="10.5" cy="22.4" rx="4.6" ry="1.6" fill="url(#cg)" stroke="#d4930f" stroke-width="0.5"/><ellipse cx="10.5" cy="20.6" rx="4.6" ry="1.6" fill="url(#cg)" stroke="#d4930f" stroke-width="0.5"/><ellipse cx="10.5" cy="18.7" rx="4.6" ry="1.6" fill="url(#cg)" stroke="#d4930f" stroke-width="0.5"/><ellipse cx="10.5" cy="16.9" rx="4.6" ry="1.6" fill="url(#cg)" stroke="#d4930f" stroke-width="0.5"/><ellipse cx="10.5" cy="15.0" rx="4.6" ry="1.6" fill="url(#cg)" stroke="#d4930f" stroke-width="0.5"/><path d="M2.5 28 C10 24.5 22 32 37.5 27.5 L37.5 45 C22 48.5 10 40 2.5 43.5 Z" fill="url(#bill)" stroke="#8d8f88" stroke-width="0.6"/><ellipse cx="16.5" cy="38" rx="4.2" ry="5" fill="#efefe6" stroke="#aaa" stroke-width="0.5"/><circle cx="27" cy="36" r="2" fill="#3d7f5b"/><ellipse cx="42" cy="42.5" rx="4" ry="1.5" fill="url(#cg)" stroke="#d4930f" stroke-width="0.5"/><ellipse cx="42" cy="40.5" rx="4" ry="1.5" fill="url(#cg)" stroke="#d4930f" stroke-width="0.5"/><ellipse cx="42" cy="38.5" rx="4" ry="1.5" fill="url(#cg)" stroke="#d4930f" stroke-width="0.5"/><ellipse cx="42" cy="36.5" rx="4" ry="1.5" fill="url(#cg)" stroke="#d4930f" stroke-width="0.5"/><ellipse cx="42" cy="34.5" rx="4" ry="1.5" fill="url(#cg)" stroke="#d4930f" stroke-width="0.5"/><ellipse cx="42" cy="32.5" rx="4" ry="1.5" fill="url(#cg)" stroke="#d4930f" stroke-width="0.5"/><ellipse cx="42" cy="30.5" rx="4" ry="1.5" fill="url(#cg)" stroke="#d4930f" stroke-width="0.5"/><ellipse cx="25.5" cy="45.5" rx="4.4" ry="1.7" fill="url(#cg)" stroke="#d4930f" stroke-width="0.5"/><ellipse cx="25.5" cy="44.0" rx="4.4" ry="1.7" fill="url(#cg)" stroke="#d4930f" stroke-width="0.5"/><ellipse cx="25.5" cy="42.5" rx="4.4" ry="1.7" fill="url(#cg)" stroke="#d4930f" stroke-width="0.5"/></svg>
<div style="left:64px;top:487px;width:63px;height:48px;background:#7CFC00"></div>
<div class="b" style="left:64px;top:495px;font-size:21px;line-height:30px">工资表</div>
<svg style="left:16px;top:553px" width="48" height="48" viewBox="0 0 48 48" ><defs><linearGradient id="pg" x1="0" y1="0" x2="0" y2="1"><stop offset="0" stop-color="#ffc22e"/><stop offset="1" stop-color="#f08a00"/></linearGradient></defs><ellipse cx="15" cy="40" rx="12.5" ry="4.6" fill="url(#pg)" stroke="#d87a00" stroke-width="0.7"/><ellipse cx="16.5" cy="35.5" rx="12.5" ry="4.6" fill="url(#pg)" stroke="#d87a00" stroke-width="0.7"/><ellipse cx="15.5" cy="31" rx="12.5" ry="4.6" fill="url(#pg)" stroke="#d87a00" stroke-width="0.7"/><ellipse cx="17" cy="26.5" rx="12.5" ry="4.6" fill="url(#pg)" stroke="#d87a00" stroke-width="0.7"/><ellipse cx="15.5" cy="22" rx="12.5" ry="4.6" fill="url(#pg)" stroke="#d87a00" stroke-width="0.7"/><ellipse cx="13" cy="13.5" rx="13" ry="5" fill="url(#pg)" stroke="#d87a00" stroke-width="0.7"/><ellipse cx="17" cy="8.5" rx="12.5" ry="5.2" fill="#ffb51f" stroke="#d87a00" stroke-width="0.7"/><text x="17" y="11.5" text-anchor="middle" font-family="Liberation Sans,sans-serif" font-weight="bold" font-size="8" fill="#c06a00">$</text><g transform="rotate(-15 36 29)"><ellipse cx="36" cy="29" rx="8.2" ry="16" fill="#f7a40c" stroke="#d87a00" stroke-width="0.8"/><ellipse cx="36.8" cy="29" rx="6.2" ry="13" fill="#fbb321"/><text x="37" y="34" text-anchor="middle" font-family="Liberation Sans,sans-serif" font-weight="bold" font-size="15" fill="#b96400">$</text></g><circle cx="42.5" cy="10.5" r="5" fill="#fbb321" stroke="#e08a00" stroke-width="0.8"/><text x="42.5" y="13" text-anchor="middle" font-family="Liberation Sans,sans-serif" font-weight="bold" font-size="7" fill="#b96400">$</text><circle cx="35.5" cy="4.5" r="2.4" fill="#fbb321"/><circle cx="40" cy="1.5" r="1.6" fill="#fbb321"/></svg>
<div style="left:64px;top:561px;font-size:21px;line-height:30px">计件工资</div>
<svg style="left:16px;top:617px" width="48" height="48" viewBox="0 0 48 48" ><rect width="48" height="48" fill="#f4f4f4"/><circle cx="24" cy="24" r="24" fill="#e04f5f"/><path d="M15.5 23.5 L24 15 L28 20 L35 13" fill="none" stroke="#fddc3f" stroke-width="2.2"/><path d="M31.5 11.5 L38 10.5 L36.5 17 Z" fill="#fddc3f"/><path d="M10 38.5 H38 V30 L35 24 H13 L10 30 Z" fill="#8fdcc8"/><path d="M10 32 H38 M10 34.2 H38 M10 36.4 H38" stroke="#d8f5ee" stroke-width="0.9"/><path d="M13 24 H35 L37.5 29.5 H10.5 Z" fill="#17a085"/><ellipse cx="24" cy="26.8" rx="2.4" ry="1.9" fill="#e6faf5"/></svg>
<div style="left:64px;top:625px;font-size:21px;line-height:30px">计时工资</div>
<svg style="left:16px;top:680px" width="48" height="48" viewBox="0 0 48 48" ><defs><linearGradient id="pu" x1="0" y1="0" x2="0" y2="1"><stop offset="0" stop-color="#ffc62a"/><stop offset="1" stop-color="#ff9700"/></linearGradient><linearGradient id="cg3" x1="0" y1="0" x2="1" y2="0"><stop offset="0" stop-color="#f5ad10"/><stop offset="0.5" stop-color="#ffe678"/><stop offset="1" stop-color="#f1a306"/></linearGradient></defs><path d="M9 11 C14 9 28 9 33 11 L40 25 C42.5 33.5 38 35 22 35 C8 35 3 33.5 5.5 25 Z" fill="url(#pu)"/><path d="M7 20 C6 26 6 30 8 33" fill="none" stroke="#ffda6a" stroke-width="1.2" opacity="0.8"/><path d="M10 11 C14 8 28 8 32 11 L32 12.8 C27 10.6 15 10.6 10 12.8 Z" fill="#6b3a1a"/><path d="M8.3 13.5 C8.6 8 12.5 6.3 21 6.3 C29.5 6.3 33.4 8 33.7 13.5" fill="none" stroke="#d8d8d8" stroke-width="2.2"/><path d="M20.5 3.3 L23.5 7 L27 8.3" fill="none" stroke="#b9b9b9" stroke-width="1.5"/><circle cx="20.3" cy="3.2" r="1.4" fill="#9a9a9a"/><ellipse cx="31.5" cy="28.0" rx="5.7" ry="2.4" fill="url(#cg3)" stroke="#e59b05" stroke-width="0.5"/><ellipse cx="31.5" cy="25.9" rx="5.7" ry="2.4" fill="url(#cg3)" stroke="#e59b05" stroke-width="0.5"/><ellipse cx="31.5" cy="23.8" rx="5.7" ry="2.4" fill="url(#cg3)" stroke="#e59b05" stroke-width="0.5"/><ellipse cx="31.5" cy="21.6" rx="5.7" ry="2.4" fill="url(#cg3)" stroke="#e59b05" stroke-width="0.5"/><ellipse cx="31.5" cy="19.5" rx="5.7" ry="2.4" fill="url(#cg3)" stroke="#e59b05" stroke-width="0.5"/><ellipse cx="26.5" cy="43.0" rx="5.7" ry="2.4" fill="url(#cg3)" stroke="#e59b05" stroke-width="0.5"/><ellipse cx="26.5" cy="40.5" rx="5.7" ry="2.4" fill="url(#cg3)" stroke="#e59b05" stroke-width="0.5"/><ellipse cx="26.5" cy="38.0" rx="5.7" ry="2.4" fill="url(#cg3)" stroke="#e59b05" stroke-width="0.5"/><ellipse cx="26.5" cy="35.5" rx="5.7" ry="2.4" fill="url(#cg3)" stroke="#e59b05" stroke-width="0.5"/><ellipse cx="26.5" cy="33.0" rx="5.7" ry="2.4" fill="url(#cg3)" stroke="#e59b05" stroke-width="0.5"/><ellipse cx="26.5" cy="30.5" rx="5.7" ry="2.4" fill="url(#cg3)" stroke="#e59b05" stroke-width="0.5"/><ellipse cx="39" cy="41.5" rx="5.7" ry="2.4" fill="url(#cg3)" stroke="#e59b05" stroke-width="0.5"/><ellipse cx="39" cy="39.1" rx="5.7" ry="2.4" fill="url(#cg3)" stroke="#e59b05" stroke-width="0.5"/><ellipse cx="39" cy="36.8" rx="5.7" ry="2.4" fill="url(#cg3)" stroke="#e59b05" stroke-width="0.5"/><ellipse cx="39" cy="34.4" rx="5.7" ry="2.4" fill="url(#cg3)" stroke="#e59b05" stroke-width="0.5"/><ellipse cx="39" cy="32.0" rx="5.7" ry="2.4" fill="url(#cg3)" stroke="#e59b05" stroke-width="0.5"/></svg>
<div style="left:64px;top:688px;font-size:21px;line-height:30px">工种设置</div>
<svg style="left:16px;top:743px" width="48" height="48" viewBox="0 0 48 48" ><defs><linearGradient id="yb" x1="0" y1="0" x2="1" y2="0"><stop offset="0" stop-color="#ffe24d"/><stop offset="1" stop-color="#f8bd1c"/></linearGradient><linearGradient id="pc" x1="0" y1="1" x2="1" y2="0"><stop offset="0" stop-color="#f9b41c"/><stop offset="1" stop-color="#ef6c1a"/></linearGradient></defs><path d="M1 30.5 L22 21 L46.5 34.5 L25.5 46.5 Z" fill="#f5f5f5"/><path d="M1 30.5 L25.5 46.5 L46.5 34.5" fill="none" stroke="#e2e2e2" stroke-width="0.8"/><path d="M27 40.5 L41 33.5 M29.5 42.5 L44 35.5" stroke="#d2d2d2" stroke-width="0.9"/><path d="M28 35 L45 39 L41 42 Z" fill="#c9c9c9" opacity="0.7"/><path d="M19.5 7 L33.5 9 L33.5 31 L19.5 28 Z" fill="url(#yb)"/><path d="M23 8 C23 0 31 0 31 9" fill="none" stroke="#fad232" stroke-width="1.6"/><circle cx="22.5" cy="12" r="0.8" fill="#fff"/><circle cx="29.5" cy="15" r="0.8" fill="#fff"/><path d="M6 19 L17 23.5 L17 37.5 L6 32.5 Z" fill="#e6e6ec"/><path d="M17 23.5 L29 19 L29 32.5 L17 37.5 Z" fill="#f4f4f8"/><path d="M6 19 L18 14.5 L29 19 L17 23.5 Z" fill="#fbfbfd"/><path d="M10 20.7 L13 21.9 V35.8 L10 34.4 Z" fill="#f59a23"/><path d="M21.5 21.8 L24.5 20.7 V34.4 L21.5 35.8 Z" fill="#f7a83a"/><path d="M8.5 17.5 C10 13.5 15 15 17.5 18.5 C20 15 25 13.5 26.5 17.5 L25.5 20.5 C22 21 19.5 20.5 17.5 19.5 C15.5 20.5 13 21 9.5 20.5 Z" fill="#f28a1c"/><path d="M26.3 33.8 L39.8 18.8 C42.8 16.3 47.8 20.2 46.4 24.6 L28 34.8 Z" fill="url(#pc)"/><ellipse cx="43.6" cy="21.6" rx="3" ry="3.6" transform="rotate(-40 43.6 22)" fill="#fbd44a"/><circle cx="43.7" cy="22" r="1" fill="#e8701a"/><path d="M26 34.2 L28 32.6 L28.4 34.4 Z" fill="#333"/></svg>
<div style="left:64px;top:751px;font-size:21px;line-height:30px">工序分组设置</div>
<svg style="left:16px;top:806px" width="48" height="48" viewBox="0 0 48 48" ><defs><linearGradient id="yb" x1="0" y1="0" x2="1" y2="0"><stop offset="0" stop-color="#ffe24d"/><stop offset="1" stop-color="#f8bd1c"/></linearGradient><linearGradient id="pc" x1="0" y1="1" x2="1" y2="0"><stop offset="0" stop-color="#f9b41c"/><stop offset="1" stop-color="#ef6c1a"/></linearGradient></defs><path d="M1 30.5 L22 21 L46.5 34.5 L25.5 46.5 Z" fill="#f5f5f5"/><path d="M1 30.5 L25.5 46.5 L46.5 34.5" fill="none" stroke="#e2e2e2" stroke-width="0.8"/><path d="M27 40.5 L41 33.5 M29.5 42.5 L44 35.5" stroke="#d2d2d2" stroke-width="0.9"/><path d="M28 35 L45 39 L41 42 Z" fill="#c9c9c9" opacity="0.7"/><path d="M19.5 7 L33.5 9 L33.5 31 L19.5 28 Z" fill="url(#yb)"/><path d="M23 8 C23 0 31 0 31 9" fill="none" stroke="#fad232" stroke-width="1.6"/><circle cx="22.5" cy="12" r="0.8" fill="#fff"/><circle cx="29.5" cy="15" r="0.8" fill="#fff"/><path d="M6 19 L17 23.5 L17 37.5 L6 32.5 Z" fill="#e6e6ec"/><path d="M17 23.5 L29 19 L29 32.5 L17 37.5 Z" fill="#f4f4f8"/><path d="M6 19 L18 14.5 L29 19 L17 23.5 Z" fill="#fbfbfd"/><path d="M10 20.7 L13 21.9 V35.8 L10 34.4 Z" fill="#f59a23"/><path d="M21.5 21.8 L24.5 20.7 V34.4 L21.5 35.8 Z" fill="#f7a83a"/><path d="M8.5 17.5 C10 13.5 15 15 17.5 18.5 C20 15 25 13.5 26.5 17.5 L25.5 20.5 C22 21 19.5 20.5 17.5 19.5 C15.5 20.5 13 21 9.5 20.5 Z" fill="#f28a1c"/><path d="M26.3 33.8 L39.8 18.8 C42.8 16.3 47.8 20.2 46.4 24.6 L28 34.8 Z" fill="url(#pc)"/><ellipse cx="43.6" cy="21.6" rx="3" ry="3.6" transform="rotate(-40 43.6 22)" fill="#fbd44a"/><circle cx="43.7" cy="22" r="1" fill="#e8701a"/><path d="M26 34.2 L28 32.6 L28.4 34.4 Z" fill="#333"/></svg>
<div style="left:64px;top:814px;font-size:21px;line-height:30px">工序设置</div>
<svg style="left:16px;top:869px" width="48" height="48" viewBox="0 0 48 48" ><rect width="48" height="48" fill="#f5f5f5"/><ellipse cx="30.5" cy="25.8" rx="10.3" ry="4" fill="#f7b643" stroke="#eea52f" stroke-width="0.6"/><ellipse cx="30.5" cy="22.5" rx="10.3" ry="4" fill="#f7b643" stroke="#eea52f" stroke-width="0.6"/><ellipse cx="30.5" cy="19.2" rx="10.3" ry="4" fill="#f7b643" stroke="#eea52f" stroke-width="0.6"/><ellipse cx="30.5" cy="15.9" rx="10.3" ry="4" fill="#f7b643" stroke="#eea52f" stroke-width="0.6"/><ellipse cx="30.5" cy="12.6" rx="10.3" ry="4" fill="#f7b643" stroke="#eea52f" stroke-width="0.6"/><ellipse cx="30.5" cy="9.3" rx="10.3" ry="4" fill="#f7b643" stroke="#eea52f" stroke-width="0.6"/><ellipse cx="30.5" cy="6.0" rx="10.3" ry="4" fill="#f7b643" stroke="#eea52f" stroke-width="0.6"/><ellipse cx="30.5" cy="5.6" rx="8" ry="2.9" fill="#f9c04f"/><text x="30.5" y="8.2" text-anchor="middle" font-family="Liberation Sans,sans-serif" font-weight="bold" font-size="7" fill="#eea52f">$</text><path d="M7 33 C12 29 18 27 24 28.5 L36 30.5 C39 31 38.5 34 36 34.3 L41 32.5 C45 30 48 28 48 29.5 C45 35 38 40 30 41 C22 42 16 41 12 43 Z" fill="#fb6e5c"/><path d="M22 36 C28 37 33 36 36.3 34.3" fill="none" stroke="#fff" stroke-width="1"/><path d="M33 32 L36.5 32.5 L36 34.5 L33 34 Z" fill="#fff"/><path d="M0.5 34.5 L5.5 31.5 L14 43.5 L9.5 47.5 Z" fill="#425b70"/><circle cx="10.5" cy="43.8" r="1" fill="#e9e9e9"/></svg>
<div style="left:64px;top:877px;font-size:21px;line-height:30px">税金设置</div>
<svg style="left:16px;top:932px" width="48" height="48" viewBox="0 0 48 48" ><rect width="48" height="48" fill="#f5f5f5"/><circle cx="13.5" cy="15.5" r="6.5" fill="#e2662c"/><rect x="38" y="17" width="10" height="10" fill="#76a53d"/><path d="M0 36 L9 27.5 V32 H20 V40.5 H9 V45 Z" fill="#c4622e"/><path d="M19 23 V12 C19 -1 39 -1 39 12 V23" fill="none" stroke="#456986" stroke-width="4"/><circle cx="29.5" cy="29.8" r="15.5" fill="#9a9a9a" opacity="0.55"/><circle cx="28.5" cy="28.5" r="15.3" fill="#e9a534"/><circle cx="28.5" cy="28.5" r="12.7" fill="none" stroke="#d6902a" stroke-width="1.4" stroke-dasharray="0.1 6.5" stroke-linecap="round"/><circle cx="28.5" cy="28.5" r="10.3" fill="#fff"/><text x="28.5" y="35.3" text-anchor="middle" font-family="Liberation Sans,sans-serif" font-weight="bold" font-size="19.5" fill="#d08e1f">$</text></svg>
<div style="left:64px;top:940px;font-size:21px;line-height:30px">工资明细</div>
<div style="left:1px;top:1184px;width:260px;height:1px;background:#95B8E7"></div>
<div style="left:1px;top:1185px;width:260px;height:41px;background:#E0ECFF"></div>
<div class="t" style="left:8px;top:1193px;color:#0E2D5F;font-weight:bold"><span class="c">财务管理</span></div>
<svg style="left:233px;top:1198px" width="16" height="15" viewBox="0 0 16 15" ><path d="M1.5 1.5 L8 6.5 L14.5 1.5 M1.5 8.5 L8 13.5 L14.5 8.5" fill="none" stroke="#6db3e6" stroke-width="2.3" stroke-linecap="round" stroke-linejoin="round"/></svg>
<div style="left:1px;top:1225px;width:260px;height:1px;background:#95B8E7"></div>
<div style="left:1px;top:1226px;width:260px;height:41px;background:#E0ECFF"></div>
<div class="t" style="left:8px;top:1234px;color:#0E2D5F;font-weight:bold"><span class="c">生产管理</span></div>
<svg style="left:233px;top:1239px" width="16" height="15" viewBox="0 0 16 15" ><path d="M1.5 1.5 L8 6.5 L14.5 1.5 M1.5 8.5 L8 13.5 L14.5 8.5" fill="none" stroke="#6db3e6" stroke-width="2.3" stroke-linecap="round" stroke-linejoin="round"/></svg>
<div style="left:1px;top:1265px;width:260px;height:1px;background:#95B8E7"></div>
<div style="left:1px;top:1266px;width:260px;height:41px;background:#E0ECFF"></div>
<div class="t" style="left:8px;top:1274px;color:#0E2D5F;font-weight:bold"><span class="c">统计分析</span></div>
<svg style="left:233px;top:1279px" width="16" height="15" viewBox="0 0 16 15" ><path d="M1.5 1.5 L8 6.5 L14.5 1.5 M1.5 8.5 L8 13.5 L14.5 8.5" fill="none" stroke="#6db3e6" stroke-width="2.3" stroke-linecap="round" stroke-linejoin="round"/></svg>
<div style="left:1px;top:1306px;width:260px;height:1px;background:#95B8E7"></div>
<div style="left:1px;top:1307px;width:260px;height:41px;background:#E0ECFF"></div>
<div class="t" style="left:8px;top:1315px;color:#0E2D5F;font-weight:bold"><span class="c">基础资料</span></div>
<svg style="left:233px;top:1320px" width="16" height="15" viewBox="0 0 16 15" ><path d="M1.5 1.5 L8 6.5 L14.5 1.5 M1.5 8.5 L8 13.5 L14.5 8.5" fill="none" stroke="#6db3e6" stroke-width="2.3" stroke-linecap="round" stroke-linejoin="round"/></svg>
<div style="left:263px;top:81px;width:7px;height:1264px;background:#E6EEF8"></div>
<div style="left:270px;top:81px;width:1px;height:50px;background:#95B8E7"></div>
<div style="left:277px;top:84px;width:96px;height:47px;border:1px solid #95B8E7;border-bottom:none;border-radius:8px 8px 0 0;background:linear-gradient(#EFF5FF,#E0ECFF)"></div>
<svg style="left:292px;top:98px" width="25" height="22" viewBox="0 0 25 22" ><rect x="1" y="18.5" width="23" height="3.2" rx="1" fill="#5fb04a"/><path d="M5 11 H20 V20 H5 Z" fill="#f3f1ec" stroke="#bdb8ae" stroke-width="0.8"/><rect x="10" y="13.5" width="5" height="7" fill="#9a9a9a" stroke="#6e6e6e" stroke-width="0.8"/><path d="M12.5 1 L24.5 11.5 L22 14 L12.5 5.8 L3 14 L0.5 11.5 Z" fill="#d79a4e" stroke="#b77a2e" stroke-width="0.8"/></svg>
<div class="t" style="left:321px;top:96px;color:#0E2D5F"><span class="c">首页</span></div>
<div style="left:378px;top:84px;width:116px;height:47px;border:1px solid #95B8E7;border-bottom:none;border-radius:8px 8px 0 0;background:linear-gradient(#EFF5FF,#E0ECFF)"></div>
<div class="t" style="left:393px;top:96px;color:#0E2D5F"><span class="c">账套设置</span></div>
<div style="left:500px;top:84px;width:153px;height:47px;border:1px solid #95B8E7;border-bottom:none;border-radius:8px 8px 0 0;background:linear-gradient(#EFF5FF,#E0ECFF)"></div>
<div class="t" style="left:515px;top:96px;color:#0E2D5F"><span class="c">账套人员设置</span></div>
<div style="left:658px;top:84px;width:98px;height:47px;border:1px solid #95B8E7;border-bottom:none;border-radius:8px 8px 0 0;background:#fff"></div>
<div class="t" style="left:674px;top:96px;color:#0E2D5F;font-weight:bold"><span class="c">工资表</span></div>
<svg style="left:473px;top:103px" width="10" height="10" viewBox="0 0 10 10" ><path d="M1 1 L9 9 M9 1 L1 9" stroke="#8fa8c8" stroke-width="2"/></svg>
<svg style="left:631px;top:103px" width="10" height="10" viewBox="0 0 10 10" ><path d="M1 1 L9 9 M9 1 L1 9" stroke="#8fa8c8" stroke-width="2"/></svg>
<svg style="left:735px;top:103px" width="10" height="10" viewBox="0 0 10 10" ><path d="M1 1 L9 9 M9 1 L1 9" stroke="#8fa8c8" stroke-width="2"/></svg>
<div style="left:2443px;top:83px;width:6px;height:48px;background:#E0ECFF;border:1px solid #95B8E7;border-right:none"></div>
<div style="left:270px;top:130px;width:2178px;height:4px;background:#95B8E7"></div>
<div style="left:270px;top:134px;width:4px;height:1211px;background:#95B8E7"></div>
<div style="left:274px;top:134px;width:2163px;height:746px;background:#f4f4f4"></div>
<div style="left:2437px;top:134px;width:1px;height:794px;background:#95B8E7"></div>
<div style="left:274px;top:927px;width:2164px;height:1px;background:#95B8E7"></div>
<svg style="left:290px;top:150px" width="22" height="22" viewBox="0 0 22 22" ><defs><radialGradient id="ag" cx="0.5" cy="0.35" r="0.7"><stop offset="0" stop-color="#b7e3b0"/><stop offset="1" stop-color="#62b85a"/></radialGradient></defs><circle cx="11" cy="11" r="10.3" fill="#7fc978" stroke="#9ad394" stroke-width="0.8"/><circle cx="11" cy="11" r="7.6" fill="url(#ag)" stroke="#56ad4f" stroke-width="1"/><path d="M11 6.5 V15.5 M6.5 11 H15.5" stroke="#fff" stroke-width="3.2" stroke-linecap="round"/></svg>
<div class="t" style="left:319px;top:149px;color:#00f"><span class="c">增加</span></div>
<svg style="left:376px;top:153px" width="24" height="16" viewBox="0 0 24 16" ><rect x="1" y="1" width="22" height="14" rx="2.5" fill="#fff" stroke="#3d8a3d" stroke-width="1.6"/><rect x="4" y="4.2" width="16" height="7.6" rx="1.5" fill="#0d8f0d"/></svg>
<div class="t" style="left:406px;top:149px;color:#00f"><span class="c">删除</span></div>
<svg style="left:464px;top:150px" width="26" height="24" viewBox="0 0 26 24" ><rect x="0.8" y="0.8" width="21.5" height="18" rx="1" fill="#fbfcfe" stroke="#7f9fd0" stroke-width="1.5"/><rect x="1.5" y="1.5" width="20" height="3.4" fill="#a9c6ef"/><path d="M21 6 L24.5 9 L12 21 L7.5 23 L8.8 18 Z" fill="#f6cf6a" stroke="#c98f2b" stroke-width="1"/><path d="M8.8 18 L12 21 L7.5 23 Z" fill="#b0702a"/></svg>
<div class="t" style="left:495px;top:149px;color:#00f"><span class="c">设计</span></div>
<svg style="left:542px;top:158px" width="13" height="7" viewBox="0 0 13 7" ><path d="M0 0 H13 L6.5 7 Z" fill="#000"/></svg>
<svg style="left:575px;top:149px" width="24" height="24" viewBox="0 0 24 24" ><path d="M3 1 H16 L22.5 7 V23 H3 Z" fill="#cfe2f8" stroke="#7faae0" stroke-width="1.3"/><path d="M16 1 V7 H22.5" fill="#eef5fd" stroke="#7faae0" stroke-width="1"/><path d="M0.5 6.5 L5 6.5 L8 10.5 L11.5 6.5 L15.5 6.5 L10.5 12.5 L15.5 18.5 L11 18.5 L8 14.8 L5 18.5 L0.5 18.5 L5.8 12.5 Z" fill="#4aa24a" stroke="#2e7d32" stroke-width="0.6"/></svg>
<div class="t" style="left:605px;top:149px;color:#00f"><span class="c">导出</span></div>
<svg style="left:653px;top:158px" width="13" height="7" viewBox="0 0 13 7" ><path d="M0 0 H13 L6.5 7 Z" fill="#000"/></svg>
<svg style="left:686px;top:149px" width="24" height="24" viewBox="0 0 24 24" ><path d="M6 1 H18 L19 11 H5 Z" fill="#fdfdfd" stroke="#b9bec6" stroke-width="1"/><rect x="0.8" y="9.5" width="22.4" height="10.5" rx="2.5" fill="#e2e5ea" stroke="#9aa0aa" stroke-width="1.2"/><rect x="5" y="10.5" width="14" height="4" fill="#3f97e8"/><rect x="4.5" y="17" width="15" height="6" fill="#fafafa" stroke="#9aa0aa" stroke-width="1"/></svg>
<div class="t" style="left:717px;top:149px;color:#00f"><span class="c">打印选中</span></div>
<svg style="left:800px;top:158px" width="13" height="7" viewBox="0 0 13 7" ><path d="M0 0 H13 L6.5 7 Z" fill="#000"/></svg>
<svg style="left:835px;top:150px" width="23" height="23" viewBox="0 0 23 23" ><path d="M13.5 13.5 L20 20.5" stroke="#e49a3d" stroke-width="3.6" stroke-linecap="round"/><circle cx="8.8" cy="8.8" r="7.2" fill="#d6ecfb" stroke="#a8cdea" stroke-width="1.8"/><ellipse cx="7" cy="6.5" rx="3.6" ry="2.6" fill="#fff" opacity="0.8"/></svg>
<div class="t" style="left:864px;top:149px;color:#00f"><span class="c">查询</span></div>
<svg style="left:912px;top:158px" width="13" height="7" viewBox="0 0 13 7" ><path d="M0 0 H13 L6.5 7 Z" fill="#000"/></svg>
<svg style="left:945px;top:149px" width="25" height="25" viewBox="0 0 25 25" ><rect x="2.5" y="5" width="12" height="16.5" fill="#7c8079" stroke="#5d615b" stroke-width="1"/><path d="M0.5 21.5 H17" stroke="#4c4c4c" stroke-width="1.6"/><path d="M14 4 L24 0.5 V24 L14 21.5 Z" fill="#d9a566" stroke="#9b6a32" stroke-width="0.9"/><circle cx="20" cy="12.5" r="0.9" fill="#f7e07a"/><path d="M0.5 11.5 L6 6.5 V9.3 H12.5 V13.7 H6 V16.5 Z" fill="#7cc36e" stroke="#4e9d43" stroke-width="0.8"/></svg>
<div class="t" style="left:975px;top:149px;color:#00f"><span class="c">退出</span></div>
<div class="t" style="left:286px;top:203px;"><span class="c">帐套类别</span>ID</div>
<div class="combo" style="left:822px;top:197px;width:354px;height:35px"><div style="left:312px;top:0;width:41px;height:36px;background:#d9ecf1"></div><svg style="left:325px;top:12px" width="15" height="10" viewBox="0 0 15 10" ><path d="M1.5 1.5 L7.5 8 L13.5 1.5" fill="none" stroke="#4fb3e6" stroke-width="3" stroke-linecap="round" stroke-linejoin="round"/></svg></div>
<div class="t" style="left:1180px;top:203px;"><span class="c">制单日期</span></div>
<div class="combo" style="left:1720px;top:197px;width:195px;height:35px"><div style="left:154px;top:0;width:41px;height:36px;background:#d9ecf1"></div><div style="left:6px;top:5px;line-height:24px">空日期</div><svg style="left:166px;top:12px" width="15" height="10" viewBox="0 0 15 10" ><path d="M1.5 1.5 L7.5 8 L13.5 1.5" fill="none" stroke="#4fb3e6" stroke-width="3" stroke-linecap="round" stroke-linejoin="round"/></svg></div>
<div class="combo" style="left:1919px;top:197px;width:194px;height:35px"><div style="left:153px;top:0;width:41px;height:36px;background:#d9ecf1"></div><svg style="left:161px;top:5px" width="22" height="24" viewBox="0 0 22 24" ><defs><linearGradient id="calg" x1="0" y1="0" x2="0" y2="1"><stop offset="0" stop-color="#eef3ec"/><stop offset="0.8" stop-color="#e3e9e0"/><stop offset="1" stop-color="#aab3a8"/></linearGradient></defs><rect x="0.5" y="1" width="21" height="23" rx="1" fill="url(#calg)"/><path d="M0.5 2.5 Q0.5 1 2 1 H20 Q21.5 1 21.5 2.5 V9 H0.5 Z" fill="#de5a52"/><rect x="4" y="0" width="3.6" height="6.3" rx="1.2" fill="#dfe6dc"/><rect x="14.6" y="0" width="3.6" height="6.3" rx="1.2" fill="#dfe6dc"/><text x="10.2" y="18.2" text-anchor="middle" font-family="Liberation Sans,sans-serif" font-size="9.5" fill="#8e948c">17</text><circle cx="17.3" cy="19" r="2.4" fill="#e9eee6" stroke="#cfd6cc" stroke-width="0.7"/></svg></div>
<div class="t" style="left:2117px;top:203px;"><span class="c">至</span>:</div>
<div class="combo" style="left:2185px;top:197px;width:194px;height:35px"><div style="left:153px;top:0;width:41px;height:36px;background:#d9ecf1"></div><svg style="left:161px;top:5px" width="22" height="24" viewBox="0 0 22 24" ><defs><linearGradient id="calg" x1="0" y1="0" x2="0" y2="1"><stop offset="0" stop-color="#eef3ec"/><stop offset="0.8" stop-color="#e3e9e0"/><stop offset="1" stop-color="#aab3a8"/></linearGradient></defs><rect x="0.5" y="1" width="21" height="23" rx="1" fill="url(#calg)"/><path d="M0.5 2.5 Q0.5 1 2 1 H20 Q21.5 1 21.5 2.5 V9 H0.5 Z" fill="#de5a52"/><rect x="4" y="0" width="3.6" height="6.3" rx="1.2" fill="#dfe6dc"/><rect x="14.6" y="0" width="3.6" height="6.3" rx="1.2" fill="#dfe6dc"/><text x="10.2" y="18.2" text-anchor="middle" font-family="Liberation Sans,sans-serif" font-size="9.5" fill="#8e948c">17</text><circle cx="17.3" cy="19" r="2.4" fill="#e9eee6" stroke="#cfd6cc" stroke-width="0.7"/></svg></div>
<div class="gh" style="left:274px;top:249px;width:2163px;height:38px;border-top:1px solid #ddd;border-bottom:1px solid #ddd"></div>
<div style="left:274px;top:287px;width:2163px;height:593px;background:#fff"></div>
<div class="vline" style="left:318px;top:250px;width:0px;height:36px;"></div>
<div class="vline" style="left:360px;top:250px;width:0px;height:36px;"></div>
<div class="vline" style="left:479px;top:250px;width:0px;height:36px;"></div>
<div class="vline" style="left:629px;top:250px;width:0px;height:36px;"></div>
<div class="vline" style="left:706px;top:250px;width:0px;height:36px;"></div>
<div class="vline" style="left:836px;top:250px;width:0px;height:36px;"></div>
<div class="vline" style="left:936px;top:250px;width:0px;height:36px;"></div>
<div class="vline" style="left:1080px;top:250px;width:0px;height:36px;"></div>
<div class="vline" style="left:1180px;top:250px;width:0px;height:36px;"></div>
<div class="vline" style="left:1341px;top:250px;width:0px;height:36px;"></div>
<div class="vline" style="left:1441px;top:250px;width:0px;height:36px;"></div>
<div class="vline" style="left:1541px;top:250px;width:0px;height:36px;"></div>
<div class="vline" style="left:1683px;top:250px;width:0px;height:36px;"></div>
<div class="vline" style="left:1905px;top:250px;width:0px;height:36px;"></div>
<div class="vline" style="left:2029px;top:250px;width:0px;height:36px;"></div>
<div class="vline" style="left:2178px;top:250px;width:0px;height:36px;"></div>
<div class="vline" style="left:2263px;top:250px;width:0px;height:36px;"></div>
<div class="ck" style="left:328px;top:257px;width:22px;height:22px;"></div>
<div class="cell" style="left:361px;top:256px;width:118px;text-align:center;padding:0 6px"><span class="c">操作</span></div>
<div class="cell" style="left:480px;top:256px;width:149px;text-align:center;padding:0 6px"><span class="c">账套类别</span></div>
<div class="cell" style="left:630px;top:256px;width:76px;text-align:center;padding:0 6px">ID<span style="display:inline-block;position:relative;width:20px;height:16px;vertical-align:-1px"><svg style="left:7px;top:0px" width="13" height="16" viewBox="0 0 13 16" ><path d="M0.3 6.6 L6.5 0.2 L12.7 6.6 Z" fill="#c4c4c4"/><path d="M0.3 9.4 L6.5 15.8 L12.7 9.4 Z" fill="#c4c4c4"/></svg></span></div>
<div class="cell" style="left:707px;top:256px;width:129px;text-align:center;padding:0 6px"><span class="c">帐套类别</span>ID<span style="display:inline-block;position:relative;width:20px;height:16px;vertical-align:-1px"><svg style="left:7px;top:0px" width="13" height="16" viewBox="0 0 13 16" ><path d="M0.3 6.6 L6.5 0.2 L12.7 6.6 Z" fill="#c4c4c4"/><path d="M0.3 9.4 L6.5 15.8 L12.7 9.4 Z" fill="#c4c4c4"/></svg></span></div>
<div class="cell" style="left:837px;top:256px;width:99px;text-align:center;padding:0 6px"><span class="c">年份</span></div>
<div class="cell" style="left:937px;top:256px;width:143px;text-align:center;padding:0 6px"><span class="c">月份</span></div>
<div class="cell" style="left:1081px;top:256px;width:99px;text-align:center;padding:0 6px"><span class="c">全勤天数</span></div>
<div class="cell" style="left:1181px;top:256px;width:160px;text-align:center;padding:0 6px"><span class="c">发放日期</span></div>
<div class="cell" style="left:1342px;top:256px;width:99px;text-align:center;padding:0 6px"><span class="c">制单人</span></div>
<div class="cell" style="left:1442px;top:256px;width:99px;text-align:center;padding:0 6px"><span class="c">制单日期</span><span style="display:inline-block;position:relative;width:20px;height:16px;vertical-align:-1px"><svg style="left:7px;top:0px" width="13" height="16" viewBox="0 0 13 16" ><path d="M0.3 6.6 L6.5 0.2 L12.7 6.6 Z" fill="#c4c4c4"/><path d="M0.3 9.4 L6.5 15.8 L12.7 9.4 Z" fill="#c4c4c4"/></svg></span></div>
<div class="cell" style="left:1542px;top:256px;width:141px;text-align:center;padding:0 6px"><span class="c">审核人</span></div>
<div class="cell" style="left:1684px;top:256px;width:221px;text-align:center;padding:0 6px"><span class="c">审核时间</span></div>
<div class="cell" style="left:1906px;top:256px;width:123px;text-align:center;padding:0 6px"><span class="c">人数</span></div>
<div class="cell" style="left:2030px;top:256px;width:148px;text-align:center;padding:0 6px"><span class="c">是否按年计算</span></div>
<div class="cell" style="left:2179px;top:256px;width:84px;text-align:center;padding:0 6px"><span class="c">审核标志</span></div>
<div style="left:274px;top:287px;width:2174px;height:593px;overflow:hidden">
<div style="left:45px;top:0px;width:1945px;height:37px;background:#ffe48d"></div>
<div class="hline" style="left:45px;top:37px;width:1945px;height:0px;"></div>
<div class="hline" style="left:45px;top:75px;width:1945px;height:0px;"></div>
<div class="hline" style="left:45px;top:113px;width:1945px;height:0px;"></div>
<div class="hline" style="left:45px;top:151px;width:1945px;height:0px;"></div>
<div class="hline" style="left:45px;top:189px;width:1945px;height:0px;"></div>
<div class="hline" style="left:45px;top:227px;width:1945px;height:0px;"></div>
<div class="hline" style="left:45px;top:265px;width:1945px;height:0px;"></div>
<div class="hline" style="left:45px;top:303px;width:1945px;height:0px;"></div>
<div class="vline" style="left:86px;top:0px;width:0px;height:304px;"></div>
<div class="vline" style="left:205px;top:0px;width:0px;height:304px;"></div>
<div class="vline" style="left:355px;top:0px;width:0px;height:304px;"></div>
<div class="vline" style="left:432px;top:0px;width:0px;height:304px;"></div>
<div class="vline" style="left:562px;top:0px;width:0px;height:304px;"></div>
<div class="vline" style="left:662px;top:0px;width:0px;height:304px;"></div>
<div class="vline" style="left:806px;top:0px;width:0px;height:304px;"></div>
<div class="vline" style="left:906px;top:0px;width:0px;height:304px;"></div>
<div class="vline" style="left:1067px;top:0px;width:0px;height:304px;"></div>
<div class="vline" style="left:1167px;top:0px;width:0px;height:304px;"></div>
<div class="vline" style="left:1267px;top:0px;width:0px;height:304px;"></div>
<div class="vline" style="left:1409px;top:0px;width:0px;height:304px;"></div>
<div class="vline" style="left:1631px;top:0px;width:0px;height:304px;"></div>
<div class="vline" style="left:1755px;top:0px;width:0px;height:304px;"></div>
<div class="vline" style="left:1904px;top:0px;width:0px;height:304px;"></div>
<div class="vline" style="left:1989px;top:0px;width:0px;height:304px;"></div>
<div style="left:0px;top:0.0px;width:44px;height:37.5px;background:linear-gradient(to bottom,#F9F9F9,#efefef)"></div>
<div class="hline" style="left:0px;top:36px;width:45px;height:0px;"></div>
<div class="cell" style="left:0;top:5.5px;width:44px;text-align:center">1</div>
<div style="left:0px;top:37.5px;width:44px;height:37.5px;background:linear-gradient(to bottom,#F9F9F9,#efefef)"></div>
<div class="hline" style="left:0px;top:74px;width:45px;height:0px;"></div>
<div class="cell" style="left:0;top:43.0px;width:44px;text-align:center">2</div>
<div style="left:0px;top:75.0px;width:44px;height:37.5px;background:linear-gradient(to bottom,#F9F9F9,#efefef)"></div>
<div class="hline" style="left:0px;top:112px;width:45px;height:0px;"></div>
<div class="cell" style="left:0;top:80.5px;width:44px;text-align:center">3</div>
<div style="left:0px;top:112.5px;width:44px;height:37.5px;background:linear-gradient(to bottom,#F9F9F9,#efefef)"></div>
<div class="hline" style="left:0px;top:149px;width:45px;height:0px;"></div>
<div class="cell" style="left:0;top:118.0px;width:44px;text-align:center">4</div>
<div style="left:0px;top:150.0px;width:44px;height:37.5px;background:linear-gradient(to bottom,#F9F9F9,#efefef)"></div>
<div class="hline" style="left:0px;top:186px;width:45px;height:0px;"></div>
<div class="cell" style="left:0;top:155.5px;width:44px;text-align:center">5</div>
<div style="left:0px;top:187.5px;width:44px;height:37.5px;background:linear-gradient(to bottom,#F9F9F9,#efefef)"></div>
<div class="hline" style="left:0px;top:224px;width:45px;height:0px;"></div>
<div class="cell" style="left:0;top:193.0px;width:44px;text-align:center">6</div>
<div style="left:0px;top:225.0px;width:44px;height:37.5px;background:linear-gradient(to bottom,#F9F9F9,#efefef)"></div>
<div class="hline" style="left:0px;top:262px;width:45px;height:0px;"></div>
<div class="cell" style="left:0;top:230.5px;width:44px;text-align:center">7</div>
<div style="left:0px;top:262.5px;width:44px;height:37.5px;background:linear-gradient(to bottom,#F9F9F9,#efefef)"></div>
<div class="hline" style="left:0px;top:299px;width:45px;height:0px;"></div>
<div class="cell" style="left:0;top:268.0px;width:44px;text-align:center">8</div>
<div class="vline" style="left:44px;top:0px;width:0px;height:300.0px;"></div>
<div class="ck" style="left:54px;top:8px;width:22px;height:22px;"></div>
<svg style="left:94px;top:1px" width="31" height="31" viewBox="0 0 31 31" ><path d="M7.3 19 H3.5 Q1.5 19 1.5 17 V8.5 Q1.5 6.5 3.5 6.5 H22 Q24 6.5 24 8.5 V11.5" fill="none" stroke="#92cdf7" stroke-width="2.4"/><path d="M17 24.3 H9 Q7 24.3 7 22.3 V14 Q7 12 9 12 H27.3 Q29.3 12 29.3 14 V18" fill="none" stroke="#92cdf7" stroke-width="2.4"/><circle cx="23.8" cy="24" r="6.1" fill="#3fa045"/><path d="M23.8 20.3 V27.7 M20.1 24 H27.5" stroke="#fff" stroke-width="2.4" stroke-linecap="round"/></svg>
<div class="cell" style="left:125px;top:12px">|</div>
<svg style="left:134px;top:0px" width="30" height="30" viewBox="0 0 30 30" ><rect x="0" y="0" width="30" height="30" fill="#f4f4f4"/><path d="M16 7.3 H4.6 V24.6 H22.4 V15" fill="none" stroke="#5f8bad" stroke-width="2"/><path d="M20.5 3 L25.8 7.4 L11.2 22 L6.3 23.4 L7.2 18 Z" fill="#62c3ef" stroke="#4d80a6" stroke-width="1.5" stroke-linejoin="round"/><path d="M21 2.6 Q23.6 0.8 25.4 2.9 Q27.4 5 25.9 7.3" fill="#f4f4f4" stroke="#4d80a6" stroke-width="1.4"/><path d="M10.2 17.5 L20.5 7.2" stroke="#4d80a6" stroke-width="1"/><path d="M7.2 18 L6.3 23.4 L11.2 22" fill="#f4f4f4" stroke="#4d80a6" stroke-width="1.2" stroke-linejoin="round"/><path d="M6.5 22.9 H19.8" stroke="#5f8bad" stroke-width="1.4"/></svg>
<div class="cell" style="left:164px;top:12px">|</div>
<svg style="left:173px;top:0px" width="30" height="30" viewBox="0 0 30 30" ><rect x="0" y="0" width="30" height="30" fill="#f4f4f4"/><path d="M10 5.5 V0.8 H17.5 V5.5" fill="none" stroke="#c64a55" stroke-width="1.8"/><rect x="2.5" y="5.8" width="22" height="4" fill="#f5abab" stroke="#c64a55" stroke-width="1.6"/><path d="M4.5 10.5 L6.8 27 H16" fill="none" stroke="#c64a55" stroke-width="2"/><path d="M22.8 10.5 L22 16" fill="none" stroke="#c64a55" stroke-width="2"/><path d="M9.3 13 L10.3 23.5 M13.7 13 V23.5 M18 13 L17.6 17.5" stroke="#c64a55" stroke-width="1.6"/><path d="M22.3 15 V17.5" stroke="#c64a55" stroke-width="1.6"/><circle cx="22.3" cy="23" r="5.2" fill="#fbf3f3" stroke="#c64a55" stroke-width="1.7"/><path d="M20.2 20.9 L24.4 25.1 M24.4 20.9 L20.2 25.1" stroke="#c64a55" stroke-width="1.6"/></svg>
<div class="cell" style="left:206px;top:6px;width:149px;text-align:center;padding:0 6px"><span class="c">正式职工帐套</span></div>
<div class="cell" style="left:356px;top:6px;width:76px;text-align:left;padding:0 6px">24</div>
<div class="cell" style="left:433px;top:6px;width:129px;text-align:left;padding:0 6px">1</div>
<div class="cell" style="left:563px;top:6px;width:99px;text-align:left;padding:0 6px">2025</div>
<div class="cell" style="left:663px;top:6px;width:143px;text-align:left;padding:0 6px">11</div>
<div class="cell" style="left:807px;top:6px;width:99px;text-align:right;padding:0 6px">0.00</div>
<div class="cell" style="left:907px;top:6px;width:160px;text-align:left;padding:0 6px">2025-11-07</div>
<div class="cell" style="left:1632px;top:6px;width:123px;text-align:left;padding:0 6px">0</div>
<div class="cell" style="left:1756px;top:6px;width:148px;text-align:left;padding:0 6px">0</div>
<div class="cell" style="left:1905px;top:6px;width:84px;text-align:center;padding:0 6px"><span class="c">未审核</span></div>
<div class="ck" style="left:54px;top:46px;width:22px;height:22px;"></div>
<svg style="left:94px;top:39px" width="31" height="31" viewBox="0 0 31 31" ><path d="M7.3 19 H3.5 Q1.5 19 1.5 17 V8.5 Q1.5 6.5 3.5 6.5 H22 Q24 6.5 24 8.5 V11.5" fill="none" stroke="#92cdf7" stroke-width="2.4"/><path d="M17 24.3 H9 Q7 24.3 7 22.3 V14 Q7 12 9 12 H27.3 Q29.3 12 29.3 14 V18" fill="none" stroke="#92cdf7" stroke-width="2.4"/><circle cx="23.8" cy="24" r="6.1" fill="#3fa045"/><path d="M23.8 20.3 V27.7 M20.1 24 H27.5" stroke="#fff" stroke-width="2.4" stroke-linecap="round"/></svg>
<div class="cell" style="left:125px;top:50px">|</div>
<svg style="left:134px;top:38px" width="30" height="30" viewBox="0 0 30 30" ><rect x="0" y="0" width="30" height="30" fill="#f4f4f4"/><path d="M16 7.3 H4.6 V24.6 H22.4 V15" fill="none" stroke="#5f8bad" stroke-width="2"/><path d="M20.5 3 L25.8 7.4 L11.2 22 L6.3 23.4 L7.2 18 Z" fill="#62c3ef" stroke="#4d80a6" stroke-width="1.5" stroke-linejoin="round"/><path d="M21 2.6 Q23.6 0.8 25.4 2.9 Q27.4 5 25.9 7.3" fill="#f4f4f4" stroke="#4d80a6" stroke-width="1.4"/><path d="M10.2 17.5 L20.5 7.2" stroke="#4d80a6" stroke-width="1"/><path d="M7.2 18 L6.3 23.4 L11.2 22" fill="#f4f4f4" stroke="#4d80a6" stroke-width="1.2" stroke-linejoin="round"/><path d="M6.5 22.9 H19.8" stroke="#5f8bad" stroke-width="1.4"/></svg>
<div class="cell" style="left:164px;top:50px">|</div>
<svg style="left:173px;top:38px" width="30" height="30" viewBox="0 0 30 30" ><rect x="0" y="0" width="30" height="30" fill="#f4f4f4"/><path d="M10 5.5 V0.8 H17.5 V5.5" fill="none" stroke="#c64a55" stroke-width="1.8"/><rect x="2.5" y="5.8" width="22" height="4" fill="#f5abab" stroke="#c64a55" stroke-width="1.6"/><path d="M4.5 10.5 L6.8 27 H16" fill="none" stroke="#c64a55" stroke-width="2"/><path d="M22.8 10.5 L22 16" fill="none" stroke="#c64a55" stroke-width="2"/><path d="M9.3 13 L10.3 23.5 M13.7 13 V23.5 M18 13 L17.6 17.5" stroke="#c64a55" stroke-width="1.6"/><path d="M22.3 15 V17.5" stroke="#c64a55" stroke-width="1.6"/><circle cx="22.3" cy="23" r="5.2" fill="#fbf3f3" stroke="#c64a55" stroke-width="1.7"/><path d="M20.2 20.9 L24.4 25.1 M24.4 20.9 L20.2 25.1" stroke="#c64a55" stroke-width="1.6"/></svg>
<div class="cell" style="left:206px;top:44px;width:149px;text-align:center;padding:0 6px"><span class="c">临时职工帐套</span></div>
<div class="cell" style="left:356px;top:44px;width:76px;text-align:left;padding:0 6px">23</div>
<div class="cell" style="left:433px;top:44px;width:129px;text-align:left;padding:0 6px">3</div>
<div class="cell" style="left:563px;top:44px;width:99px;text-align:left;padding:0 6px">2024</div>
<div class="cell" style="left:663px;top:44px;width:143px;text-align:left;padding:0 6px">12</div>
<div class="cell" style="left:807px;top:44px;width:99px;text-align:right;padding:0 6px">22.00</div>
<div class="cell" style="left:907px;top:44px;width:160px;text-align:left;padding:0 6px">2024-12-10</div>
<div class="cell" style="left:1068px;top:44px;width:99px;text-align:left;padding:0 6px">Admin</div>
<div class="cell" style="left:1168px;top:44px;width:99px;text-align:left;padding:0 6px">2024-12-10 16:08:22</div>
<div class="cell" style="left:1632px;top:44px;width:123px;text-align:left;padding:0 6px">4</div>
<div class="cell" style="left:1756px;top:44px;width:148px;text-align:left;padding:0 6px">0</div>
<div class="cell" style="left:1905px;top:44px;width:84px;text-align:center;padding:0 6px"><span class="c">未审核</span></div>
<div class="ck" style="left:54px;top:84px;width:22px;height:22px;"></div>
<svg style="left:94px;top:77px" width="31" height="31" viewBox="0 0 31 31" ><path d="M7.3 19 H3.5 Q1.5 19 1.5 17 V8.5 Q1.5 6.5 3.5 6.5 H22 Q24 6.5 24 8.5 V11.5" fill="none" stroke="#92cdf7" stroke-width="2.4"/><path d="M17 24.3 H9 Q7 24.3 7 22.3 V14 Q7 12 9 12 H27.3 Q29.3 12 29.3 14 V18" fill="none" stroke="#92cdf7" stroke-width="2.4"/><circle cx="23.8" cy="24" r="6.1" fill="#3fa045"/><path d="M23.8 20.3 V27.7 M20.1 24 H27.5" stroke="#fff" stroke-width="2.4" stroke-linecap="round"/></svg>
<div class="cell" style="left:125px;top:88px">|</div>
<svg style="left:134px;top:76px" width="30" height="30" viewBox="0 0 30 30" ><rect x="0" y="0" width="30" height="30" fill="#f4f4f4"/><path d="M16 7.3 H4.6 V24.6 H22.4 V15" fill="none" stroke="#5f8bad" stroke-width="2"/><path d="M20.5 3 L25.8 7.4 L11.2 22 L6.3 23.4 L7.2 18 Z" fill="#62c3ef" stroke="#4d80a6" stroke-width="1.5" stroke-linejoin="round"/><path d="M21 2.6 Q23.6 0.8 25.4 2.9 Q27.4 5 25.9 7.3" fill="#f4f4f4" stroke="#4d80a6" stroke-width="1.4"/><path d="M10.2 17.5 L20.5 7.2" stroke="#4d80a6" stroke-width="1"/><path d="M7.2 18 L6.3 23.4 L11.2 22" fill="#f4f4f4" stroke="#4d80a6" stroke-width="1.2" stroke-linejoin="round"/><path d="M6.5 22.9 H19.8" stroke="#5f8bad" stroke-width="1.4"/></svg>
<div class="cell" style="left:164px;top:88px">|</div>
<svg style="left:173px;top:76px" width="30" height="30" viewBox="0 0 30 30" ><rect x="0" y="0" width="30" height="30" fill="#f4f4f4"/><path d="M10 5.5 V0.8 H17.5 V5.5" fill="none" stroke="#c64a55" stroke-width="1.8"/><rect x="2.5" y="5.8" width="22" height="4" fill="#f5abab" stroke="#c64a55" stroke-width="1.6"/><path d="M4.5 10.5 L6.8 27 H16" fill="none" stroke="#c64a55" stroke-width="2"/><path d="M22.8 10.5 L22 16" fill="none" stroke="#c64a55" stroke-width="2"/><path d="M9.3 13 L10.3 23.5 M13.7 13 V23.5 M18 13 L17.6 17.5" stroke="#c64a55" stroke-width="1.6"/><path d="M22.3 15 V17.5" stroke="#c64a55" stroke-width="1.6"/><circle cx="22.3" cy="23" r="5.2" fill="#fbf3f3" stroke="#c64a55" stroke-width="1.7"/><path d="M20.2 20.9 L24.4 25.1 M24.4 20.9 L20.2 25.1" stroke="#c64a55" stroke-width="1.6"/></svg>
<div class="cell" style="left:206px;top:82px;width:149px;text-align:center;padding:0 6px"><span class="c">按年工资帐套</span></div>
<div class="cell" style="left:356px;top:82px;width:76px;text-align:left;padding:0 6px">21</div>
<div class="cell" style="left:433px;top:82px;width:129px;text-align:left;padding:0 6px">5</div>
<div class="cell" style="left:563px;top:82px;width:99px;text-align:left;padding:0 6px">2023</div>
<div class="cell" style="left:663px;top:82px;width:143px;text-align:left;padding:0 6px">3</div>
<div class="cell" style="left:807px;top:82px;width:99px;text-align:right;padding:0 6px">22.00</div>
<div class="cell" style="left:907px;top:82px;width:160px;text-align:left;padding:0 6px">2023-03-17</div>
<div class="cell" style="left:1068px;top:82px;width:99px;text-align:left;padding:0 6px">Admin</div>
<div class="cell" style="left:1168px;top:82px;width:99px;text-align:left;padding:0 6px">2023-04-20 10:31:05</div>
<div class="cell" style="left:1632px;top:82px;width:123px;text-align:left;padding:0 6px">4</div>
<div class="cell" style="left:1756px;top:82px;width:148px;text-align:left;padding:0 6px">1</div>
<div class="cell" style="left:1905px;top:82px;width:84px;text-align:center;padding:0 6px"><span class="c">未审核</span></div>
<div class="ck" style="left:54px;top:122px;width:22px;height:22px;"></div>
<svg style="left:94px;top:115px" width="31" height="31" viewBox="0 0 31 31" ><path d="M7.3 19 H3.5 Q1.5 19 1.5 17 V8.5 Q1.5 6.5 3.5 6.5 H22 Q24 6.5 24 8.5 V11.5" fill="none" stroke="#92cdf7" stroke-width="2.4"/><path d="M17 24.3 H9 Q7 24.3 7 22.3 V14 Q7 12 9 12 H27.3 Q29.3 12 29.3 14 V18" fill="none" stroke="#92cdf7" stroke-width="2.4"/><circle cx="23.8" cy="24" r="6.1" fill="#3fa045"/><path d="M23.8 20.3 V27.7 M20.1 24 H27.5" stroke="#fff" stroke-width="2.4" stroke-linecap="round"/></svg>
<div class="cell" style="left:125px;top:126px">|</div>
<svg style="left:134px;top:114px" width="30" height="30" viewBox="0 0 30 30" ><rect x="0" y="0" width="30" height="30" fill="#f4f4f4"/><path d="M16 7.3 H4.6 V24.6 H22.4 V15" fill="none" stroke="#5f8bad" stroke-width="2"/><path d="M20.5 3 L25.8 7.4 L11.2 22 L6.3 23.4 L7.2 18 Z" fill="#62c3ef" stroke="#4d80a6" stroke-width="1.5" stroke-linejoin="round"/><path d="M21 2.6 Q23.6 0.8 25.4 2.9 Q27.4 5 25.9 7.3" fill="#f4f4f4" stroke="#4d80a6" stroke-width="1.4"/><path d="M10.2 17.5 L20.5 7.2" stroke="#4d80a6" stroke-width="1"/><path d="M7.2 18 L6.3 23.4 L11.2 22" fill="#f4f4f4" stroke="#4d80a6" stroke-width="1.2" stroke-linejoin="round"/><path d="M6.5 22.9 H19.8" stroke="#5f8bad" stroke-width="1.4"/></svg>
<div class="cell" style="left:164px;top:126px">|</div>
<svg style="left:173px;top:114px" width="30" height="30" viewBox="0 0 30 30" ><rect x="0" y="0" width="30" height="30" fill="#f4f4f4"/><path d="M10 5.5 V0.8 H17.5 V5.5" fill="none" stroke="#c64a55" stroke-width="1.8"/><rect x="2.5" y="5.8" width="22" height="4" fill="#f5abab" stroke="#c64a55" stroke-width="1.6"/><path d="M4.5 10.5 L6.8 27 H16" fill="none" stroke="#c64a55" stroke-width="2"/><path d="M22.8 10.5 L22 16" fill="none" stroke="#c64a55" stroke-width="2"/><path d="M9.3 13 L10.3 23.5 M13.7 13 V23.5 M18 13 L17.6 17.5" stroke="#c64a55" stroke-width="1.6"/><path d="M22.3 15 V17.5" stroke="#c64a55" stroke-width="1.6"/><circle cx="22.3" cy="23" r="5.2" fill="#fbf3f3" stroke="#c64a55" stroke-width="1.7"/><path d="M20.2 20.9 L24.4 25.1 M24.4 20.9 L20.2 25.1" stroke="#c64a55" stroke-width="1.6"/></svg>
<div class="cell" style="left:206px;top:120px;width:149px;text-align:center;padding:0 6px"><span class="c">按年工资帐套</span></div>
<div class="cell" style="left:356px;top:120px;width:76px;text-align:left;padding:0 6px">20</div>
<div class="cell" style="left:433px;top:120px;width:129px;text-align:left;padding:0 6px">5</div>
<div class="cell" style="left:563px;top:120px;width:99px;text-align:left;padding:0 6px">2023</div>
<div class="cell" style="left:663px;top:120px;width:143px;text-align:left;padding:0 6px">2</div>
<div class="cell" style="left:807px;top:120px;width:99px;text-align:right;padding:0 6px">22.00</div>
<div class="cell" style="left:907px;top:120px;width:160px;text-align:left;padding:0 6px">2023-02-17</div>
<div class="cell" style="left:1068px;top:120px;width:99px;text-align:left;padding:0 6px">Admin</div>
<div class="cell" style="left:1168px;top:120px;width:99px;text-align:left;padding:0 6px">2023-04-20 10:30:41</div>
<div class="cell" style="left:1632px;top:120px;width:123px;text-align:left;padding:0 6px">4</div>
<div class="cell" style="left:1756px;top:120px;width:148px;text-align:left;padding:0 6px">1</div>
<div class="cell" style="left:1905px;top:120px;width:84px;text-align:center;padding:0 6px"><span class="c">未审核</span></div>
<div class="ck" style="left:54px;top:160px;width:22px;height:22px;"></div>
<svg style="left:94px;top:153px" width="31" height="31" viewBox="0 0 31 31" ><path d="M7.3 19 H3.5 Q1.5 19 1.5 17 V8.5 Q1.5 6.5 3.5 6.5 H22 Q24 6.5 24 8.5 V11.5" fill="none" stroke="#92cdf7" stroke-width="2.4"/><path d="M17 24.3 H9 Q7 24.3 7 22.3 V14 Q7 12 9 12 H27.3 Q29.3 12 29.3 14 V18" fill="none" stroke="#92cdf7" stroke-width="2.4"/><circle cx="23.8" cy="24" r="6.1" fill="#3fa045"/><path d="M23.8 20.3 V27.7 M20.1 24 H27.5" stroke="#fff" stroke-width="2.4" stroke-linecap="round"/></svg>
<div class="cell" style="left:125px;top:164px">|</div>
<svg style="left:134px;top:152px" width="30" height="30" viewBox="0 0 30 30" ><rect x="0" y="0" width="30" height="30" fill="#f4f4f4"/><path d="M16 7.3 H4.6 V24.6 H22.4 V15" fill="none" stroke="#5f8bad" stroke-width="2"/><path d="M20.5 3 L25.8 7.4 L11.2 22 L6.3 23.4 L7.2 18 Z" fill="#62c3ef" stroke="#4d80a6" stroke-width="1.5" stroke-linejoin="round"/><path d="M21 2.6 Q23.6 0.8 25.4 2.9 Q27.4 5 25.9 7.3" fill="#f4f4f4" stroke="#4d80a6" stroke-width="1.4"/><path d="M10.2 17.5 L20.5 7.2" stroke="#4d80a6" stroke-width="1"/><path d="M7.2 18 L6.3 23.4 L11.2 22" fill="#f4f4f4" stroke="#4d80a6" stroke-width="1.2" stroke-linejoin="round"/><path d="M6.5 22.9 H19.8" stroke="#5f8bad" stroke-width="1.4"/></svg>
<div class="cell" style="left:164px;top:164px">|</div>
<svg style="left:173px;top:152px" width="30" height="30" viewBox="0 0 30 30" ><rect x="0" y="0" width="30" height="30" fill="#f4f4f4"/><path d="M10 5.5 V0.8 H17.5 V5.5" fill="none" stroke="#c64a55" stroke-width="1.8"/><rect x="2.5" y="5.8" width="22" height="4" fill="#f5abab" stroke="#c64a55" stroke-width="1.6"/><path d="M4.5 10.5 L6.8 27 H16" fill="none" stroke="#c64a55" stroke-width="2"/><path d="M22.8 10.5 L22 16" fill="none" stroke="#c64a55" stroke-width="2"/><path d="M9.3 13 L10.3 23.5 M13.7 13 V23.5 M18 13 L17.6 17.5" stroke="#c64a55" stroke-width="1.6"/><path d="M22.3 15 V17.5" stroke="#c64a55" stroke-width="1.6"/><circle cx="22.3" cy="23" r="5.2" fill="#fbf3f3" stroke="#c64a55" stroke-width="1.7"/><path d="M20.2 20.9 L24.4 25.1 M24.4 20.9 L20.2 25.1" stroke="#c64a55" stroke-width="1.6"/></svg>
<div class="cell" style="left:206px;top:158px;width:149px;text-align:center;padding:0 6px"><span class="c">按年工资帐套</span></div>
<div class="cell" style="left:356px;top:158px;width:76px;text-align:left;padding:0 6px">19</div>
<div class="cell" style="left:433px;top:158px;width:129px;text-align:left;padding:0 6px">5</div>
<div class="cell" style="left:563px;top:158px;width:99px;text-align:left;padding:0 6px">2023</div>
<div class="cell" style="left:663px;top:158px;width:143px;text-align:left;padding:0 6px">1</div>
<div class="cell" style="left:807px;top:158px;width:99px;text-align:right;padding:0 6px">22.00</div>
<div class="cell" style="left:907px;top:158px;width:160px;text-align:left;padding:0 6px">2023-01-17</div>
<div class="cell" style="left:1068px;top:158px;width:99px;text-align:left;padding:0 6px">Admin</div>
<div class="cell" style="left:1168px;top:158px;width:99px;text-align:left;padding:0 6px">2023-04-19 17:22:10</div>
<div class="cell" style="left:1632px;top:158px;width:123px;text-align:left;padding:0 6px">4</div>
<div class="cell" style="left:1756px;top:158px;width:148px;text-align:left;padding:0 6px">1</div>
<div class="cell" style="left:1905px;top:158px;width:84px;text-align:center;padding:0 6px"><span class="c">未审核</span></div>
<div class="ck" style="left:54px;top:198px;width:22px;height:22px;"></div>
<svg style="left:94px;top:191px" width="31" height="31" viewBox="0 0 31 31" ><path d="M7.3 19 H3.5 Q1.5 19 1.5 17 V8.5 Q1.5 6.5 3.5 6.5 H22 Q24 6.5 24 8.5 V11.5" fill="none" stroke="#92cdf7" stroke-width="2.4"/><path d="M17 24.3 H9 Q7 24.3 7 22.3 V14 Q7 12 9 12 H27.3 Q29.3 12 29.3 14 V18" fill="none" stroke="#92cdf7" stroke-width="2.4"/><circle cx="23.8" cy="24" r="6.1" fill="#3fa045"/><path d="M23.8 20.3 V27.7 M20.1 24 H27.5" stroke="#fff" stroke-width="2.4" stroke-linecap="round"/></svg>
<div class="cell" style="left:125px;top:202px">|</div>
<svg style="left:134px;top:190px" width="30" height="30" viewBox="0 0 30 30" ><rect x="0" y="0" width="30" height="30" fill="#f4f4f4"/><path d="M16 7.3 H4.6 V24.6 H22.4 V15" fill="none" stroke="#5f8bad" stroke-width="2"/><path d="M20.5 3 L25.8 7.4 L11.2 22 L6.3 23.4 L7.2 18 Z" fill="#62c3ef" stroke="#4d80a6" stroke-width="1.5" stroke-linejoin="round"/><path d="M21 2.6 Q23.6 0.8 25.4 2.9 Q27.4 5 25.9 7.3" fill="#f4f4f4" stroke="#4d80a6" stroke-width="1.4"/><path d="M10.2 17.5 L20.5 7.2" stroke="#4d80a6" stroke-width="1"/><path d="M7.2 18 L6.3 23.4 L11.2 22" fill="#f4f4f4" stroke="#4d80a6" stroke-width="1.2" stroke-linejoin="round"/><path d="M6.5 22.9 H19.8" stroke="#5f8bad" stroke-width="1.4"/></svg>
<div class="cell" style="left:164px;top:202px">|</div>
<svg style="left:173px;top:190px" width="30" height="30" viewBox="0 0 30 30" ><rect x="0" y="0" width="30" height="30" fill="#f4f4f4"/><path d="M10 5.5 V0.8 H17.5 V5.5" fill="none" stroke="#c64a55" stroke-width="1.8"/><rect x="2.5" y="5.8" width="22" height="4" fill="#f5abab" stroke="#c64a55" stroke-width="1.6"/><path d="M4.5 10.5 L6.8 27 H16" fill="none" stroke="#c64a55" stroke-width="2"/><path d="M22.8 10.5 L22 16" fill="none" stroke="#c64a55" stroke-width="2"/><path d="M9.3 13 L10.3 23.5 M13.7 13 V23.5 M18 13 L17.6 17.5" stroke="#c64a55" stroke-width="1.6"/><path d="M22.3 15 V17.5" stroke="#c64a55" stroke-width="1.6"/><circle cx="22.3" cy="23" r="5.2" fill="#fbf3f3" stroke="#c64a55" stroke-width="1.7"/><path d="M20.2 20.9 L24.4 25.1 M24.4 20.9 L20.2 25.1" stroke="#c64a55" stroke-width="1.6"/></svg>
<div class="cell" style="left:206px;top:196px;width:149px;text-align:center;padding:0 6px"><span class="c">销售类型工资</span></div>
<div class="cell" style="left:356px;top:196px;width:76px;text-align:left;padding:0 6px">18</div>
<div class="cell" style="left:433px;top:196px;width:129px;text-align:left;padding:0 6px">6</div>
<div class="cell" style="left:563px;top:196px;width:99px;text-align:left;padding:0 6px">2021</div>
<div class="cell" style="left:663px;top:196px;width:143px;text-align:left;padding:0 6px">5</div>
<div class="cell" style="left:807px;top:196px;width:99px;text-align:right;padding:0 6px">22.00</div>
<div class="cell" style="left:1068px;top:196px;width:99px;text-align:left;padding:0 6px">Admin</div>
<div class="cell" style="left:1168px;top:196px;width:99px;text-align:left;padding:0 6px">2021-05-18 09:15:47</div>
<div class="cell" style="left:1632px;top:196px;width:123px;text-align:left;padding:0 6px">10</div>
<div class="cell" style="left:1756px;top:196px;width:148px;text-align:left;padding:0 6px">0</div>
<div class="cell" style="left:1905px;top:196px;width:84px;text-align:center;padding:0 6px"><span class="c">未审核</span></div>
<div class="ck" style="left:54px;top:236px;width:22px;height:22px;"></div>
<svg style="left:94px;top:229px" width="31" height="31" viewBox="0 0 31 31" ><path d="M7.3 19 H3.5 Q1.5 19 1.5 17 V8.5 Q1.5 6.5 3.5 6.5 H22 Q24 6.5 24 8.5 V11.5" fill="none" stroke="#92cdf7" stroke-width="2.4"/><path d="M17 24.3 H9 Q7 24.3 7 22.3 V14 Q7 12 9 12 H27.3 Q29.3 12 29.3 14 V18" fill="none" stroke="#92cdf7" stroke-width="2.4"/><circle cx="23.8" cy="24" r="6.1" fill="#3fa045"/><path d="M23.8 20.3 V27.7 M20.1 24 H27.5" stroke="#fff" stroke-width="2.4" stroke-linecap="round"/></svg>
<div class="cell" style="left:125px;top:240px">|</div>
<svg style="left:134px;top:228px" width="30" height="30" viewBox="0 0 30 30" ><rect x="0" y="0" width="30" height="30" fill="#f4f4f4"/><path d="M16 7.3 H4.6 V24.6 H22.4 V15" fill="none" stroke="#5f8bad" stroke-width="2"/><path d="M20.5 3 L25.8 7.4 L11.2 22 L6.3 23.4 L7.2 18 Z" fill="#62c3ef" stroke="#4d80a6" stroke-width="1.5" stroke-linejoin="round"/><path d="M21 2.6 Q23.6 0.8 25.4 2.9 Q27.4 5 25.9 7.3" fill="#f4f4f4" stroke="#4d80a6" stroke-width="1.4"/><path d="M10.2 17.5 L20.5 7.2" stroke="#4d80a6" stroke-width="1"/><path d="M7.2 18 L6.3 23.4 L11.2 22" fill="#f4f4f4" stroke="#4d80a6" stroke-width="1.2" stroke-linejoin="round"/><path d="M6.5 22.9 H19.8" stroke="#5f8bad" stroke-width="1.4"/></svg>
<div class="cell" style="left:164px;top:240px">|</div>
<svg style="left:173px;top:228px" width="30" height="30" viewBox="0 0 30 30" ><rect x="0" y="0" width="30" height="30" fill="#f4f4f4"/><path d="M10 5.5 V0.8 H17.5 V5.5" fill="none" stroke="#c64a55" stroke-width="1.8"/><rect x="2.5" y="5.8" width="22" height="4" fill="#f5abab" stroke="#c64a55" stroke-width="1.6"/><path d="M4.5 10.5 L6.8 27 H16" fill="none" stroke="#c64a55" stroke-width="2"/><path d="M22.8 10.5 L22 16" fill="none" stroke="#c64a55" stroke-width="2"/><path d="M9.3 13 L10.3 23.5 M13.7 13 V23.5 M18 13 L17.6 17.5" stroke="#c64a55" stroke-width="1.6"/><path d="M22.3 15 V17.5" stroke="#c64a55" stroke-width="1.6"/><circle cx="22.3" cy="23" r="5.2" fill="#fbf3f3" stroke="#c64a55" stroke-width="1.7"/><path d="M20.2 20.9 L24.4 25.1 M24.4 20.9 L20.2 25.1" stroke="#c64a55" stroke-width="1.6"/></svg>
<div class="cell" style="left:206px;top:234px;width:149px;text-align:center;padding:0 6px"><span class="c">临时职工帐套</span></div>
<div class="cell" style="left:356px;top:234px;width:76px;text-align:left;padding:0 6px">16</div>
<div class="cell" style="left:433px;top:234px;width:129px;text-align:left;padding:0 6px">3</div>
<div class="cell" style="left:563px;top:234px;width:99px;text-align:left;padding:0 6px">2025</div>
<div class="cell" style="left:663px;top:234px;width:143px;text-align:left;padding:0 6px">2</div>
<div class="cell" style="left:807px;top:234px;width:99px;text-align:right;padding:0 6px">22.00</div>
<div class="cell" style="left:907px;top:234px;width:160px;text-align:left;padding:0 6px">2025-02-26</div>
<div class="cell" style="left:1068px;top:234px;width:99px;text-align:left;padding:0 6px">Admin</div>
<div class="cell" style="left:1632px;top:234px;width:123px;text-align:left;padding:0 6px">4</div>
<div class="cell" style="left:1756px;top:234px;width:148px;text-align:left;padding:0 6px">0</div>
<div class="cell" style="left:1905px;top:234px;width:84px;text-align:center;padding:0 6px"><span class="c">未审核</span></div>
<div class="ck" style="left:54px;top:274px;width:22px;height:22px;"></div>
<svg style="left:94px;top:267px" width="31" height="31" viewBox="0 0 31 31" ><path d="M7.3 19 H3.5 Q1.5 19 1.5 17 V8.5 Q1.5 6.5 3.5 6.5 H22 Q24 6.5 24 8.5 V11.5" fill="none" stroke="#92cdf7" stroke-width="2.4"/><path d="M17 24.3 H9 Q7 24.3 7 22.3 V14 Q7 12 9 12 H27.3 Q29.3 12 29.3 14 V18" fill="none" stroke="#92cdf7" stroke-width="2.4"/><circle cx="23.8" cy="24" r="6.1" fill="#3fa045"/><path d="M23.8 20.3 V27.7 M20.1 24 H27.5" stroke="#fff" stroke-width="2.4" stroke-linecap="round"/></svg>
<div class="cell" style="left:125px;top:278px">|</div>
<svg style="left:134px;top:266px" width="30" height="30" viewBox="0 0 30 30" ><rect x="0" y="0" width="30" height="30" fill="#f4f4f4"/><path d="M16 7.3 H4.6 V24.6 H22.4 V15" fill="none" stroke="#5f8bad" stroke-width="2"/><path d="M20.5 3 L25.8 7.4 L11.2 22 L6.3 23.4 L7.2 18 Z" fill="#62c3ef" stroke="#4d80a6" stroke-width="1.5" stroke-linejoin="round"/><path d="M21 2.6 Q23.6 0.8 25.4 2.9 Q27.4 5 25.9 7.3" fill="#f4f4f4" stroke="#4d80a6" stroke-width="1.4"/><path d="M10.2 17.5 L20.5 7.2" stroke="#4d80a6" stroke-width="1"/><path d="M7.2 18 L6.3 23.4 L11.2 22" fill="#f4f4f4" stroke="#4d80a6" stroke-width="1.2" stroke-linejoin="round"/><path d="M6.5 22.9 H19.8" stroke="#5f8bad" stroke-width="1.4"/></svg>
<div class="cell" style="left:164px;top:278px">|</div>
<svg style="left:173px;top:266px" width="30" height="30" viewBox="0 0 30 30" ><rect x="0" y="0" width="30" height="30" fill="#f4f4f4"/><path d="M10 5.5 V0.8 H17.5 V5.5" fill="none" stroke="#c64a55" stroke-width="1.8"/><rect x="2.5" y="5.8" width="22" height="4" fill="#f5abab" stroke="#c64a55" stroke-width="1.6"/><path d="M4.5 10.5 L6.8 27 H16" fill="none" stroke="#c64a55" stroke-width="2"/><path d="M22.8 10.5 L22 16" fill="none" stroke="#c64a55" stroke-width="2"/><path d="M9.3 13 L10.3 23.5 M13.7 13 V23.5 M18 13 L17.6 17.5" stroke="#c64a55" stroke-width="1.6"/><path d="M22.3 15 V17.5" stroke="#c64a55" stroke-width="1.6"/><circle cx="22.3" cy="23" r="5.2" fill="#fbf3f3" stroke="#c64a55" stroke-width="1.7"/><path d="M20.2 20.9 L24.4 25.1 M24.4 20.9 L20.2 25.1" stroke="#c64a55" stroke-width="1.6"/></svg>
<div class="cell" style="left:206px;top:272px;width:149px;text-align:center;padding:0 6px"><span class="c">临时职工帐套</span></div>
<div class="cell" style="left:356px;top:272px;width:76px;text-align:left;padding:0 6px">7</div>
<div class="cell" style="left:433px;top:272px;width:129px;text-align:left;padding:0 6px">3</div>
<div class="cell" style="left:563px;top:272px;width:99px;text-align:left;padding:0 6px">2018</div>
<div class="cell" style="left:663px;top:272px;width:143px;text-align:left;padding:0 6px">12</div>
<div class="cell" style="left:807px;top:272px;width:99px;text-align:right;padding:0 6px">22.00</div>
<div class="cell" style="left:907px;top:272px;width:160px;text-align:left;padding:0 6px">2018-12-17</div>
<div class="cell" style="left:1632px;top:272px;width:123px;text-align:left;padding:0 6px">6</div>
<div class="cell" style="left:1756px;top:272px;width:148px;text-align:left;padding:0 6px">0</div>
<div class="cell" style="left:1905px;top:272px;width:84px;text-align:center;padding:0 6px"><span class="c">未审核</span></div>
</div>
<div style="left:274px;top:879px;width:2163px;height:2px;background:#ddd"></div>
<div style="left:274px;top:881px;width:2163px;height:46px;background:#f4f4f4"></div>
<div class="ar" style="left:283px;top:889px;width:75px;height:29px;background:#cce8cf;border:1px solid #a6c8ee;font-size:22px;line-height:27px;letter-spacing:-1px"><div style="left:9px;top:-1px">20</div><svg style="left:53px;top:9px" width="14" height="9" viewBox="0 0 14 9"><path d="M1 1 L7 7.5 L13 1" fill="none" stroke="#000" stroke-width="2"/></svg></div>
<div class="sep" style="left:369px;top:885px;width:2px;height:36px;"></div>
<div class="sep" style="left:452px;top:885px;width:2px;height:36px;"></div>
<div class="sep" style="left:586px;top:885px;width:2px;height:36px;"></div>
<div class="sep" style="left:669px;top:885px;width:2px;height:36px;"></div>
<svg style="left:385px;top:895px" width="14" height="15" viewBox="0 0 14 15" ><rect x="0.5" y="0" width="3" height="15" fill="#7fbdf0"/><path d="M13.5 0 V15 L4.5 7.5 Z" fill="#7fbdf0"/></svg>
<svg style="left:426px;top:895px" width="11" height="15" viewBox="0 0 11 15" ><path d="M10.5 0 V15 L0.5 7.5 Z" fill="#7fbdf0"/></svg>
<svg style="left:604px;top:895px" width="11" height="15" viewBox="0 0 11 15" ><path d="M0.5 0 V15 L10.5 7.5 Z" fill="#7fbdf0"/></svg>
<svg style="left:641px;top:895px" width="14" height="15" viewBox="0 0 14 15" ><rect x="10.5" y="0" width="3" height="15" fill="#7fbdf0"/><path d="M0.5 0 V15 L9.5 7.5 Z" fill="#7fbdf0"/></svg>
<svg style="left:683px;top:893px" width="17" height="18" viewBox="0 0 17 18" ><path d="M10.5 3.6 A6.3 6.3 0 1 1 3.6 5.6" fill="none" stroke="#3f8ee6" stroke-width="2.6"/><path d="M6.2 0.3 L11.8 3.4 L6.6 7.2 Z" fill="#3f8ee6"/></svg>
<div class="t" style="left:464px;top:891px;"><span class="c">第</span></div>
<div class="ar" style="left:485px;top:888px;width:40px;height:31px;background:#cce8cf;border:1px solid #a6c8ee;font-size:20px;line-height:29px"><div style="left:4px;top:0">1</div></div>
<div class="t" style="left:528px;top:891px;"><span class="c">共</span>1<span class="c">页</span></div>
<div class="t" style="right:21px;top:891px"><span class="c">显示</span>1<span class="c">到</span>8,<span class="c">共</span>8<span class="c">记录</span></div>
<div style="left:274px;top:946px;width:2174px;height:1px;background:#95B8E7"></div>
<div style="left:273px;top:947px;width:2175px;height:7px;background:#E6EEF8"></div>
<div style="left:274px;top:954px;width:2174px;height:2px;background:#95B8E7"></div>
<div style="left:270px;top:956px;width:5px;height:389px;background:#95B8E7"></div>
<div style="left:274px;top:957px;width:134px;height:43px;border:3px solid #4da1ff;border-bottom:none;background:#fff"></div>
<div class="b blue" style="left:285px;top:975px;line-height:26px">工资明细</div>
<div style="left:274px;top:999px;width:2174px;height:1px;background:#95B8E7"></div>
<div style="left:2433px;top:956px;width:15px;height:43px;background:#f1f1f1"></div>
<svg style="left:2440px;top:964px" width="11" height="6" viewBox="0 0 11 6" ><path d="M0 6 L5.5 0 L11 6 Z" fill="#a3a3a3"/></svg>
<div style="left:2435px;top:977px;width:13px;height:1px;background:#c8c8c8"></div>
<svg style="left:2440px;top:985px" width="11" height="6" viewBox="0 0 11 6" ><path d="M0 0 L5.5 6 L11 0 Z" fill="#505050"/></svg>
<div style="left:274px;top:1000px;width:2174px;height:46px;background:#f4f4f4"></div>
<svg style="left:287px;top:1012px" width="22" height="22" viewBox="0 0 22 22" ><defs><radialGradient id="ag" cx="0.5" cy="0.35" r="0.7"><stop offset="0" stop-color="#b7e3b0"/><stop offset="1" stop-color="#62b85a"/></radialGradient></defs><circle cx="11" cy="11" r="10.3" fill="#7fc978" stroke="#9ad394" stroke-width="0.8"/><circle cx="11" cy="11" r="7.6" fill="url(#ag)" stroke="#56ad4f" stroke-width="1"/><path d="M11 6.5 V15.5 M6.5 11 H15.5" stroke="#fff" stroke-width="3.2" stroke-linecap="round"/></svg>
<div class="t" style="left:316px;top:1011px;color:#00f"><span class="c">增加</span></div>
<svg style="left:372px;top:1015px" width="24" height="16" viewBox="0 0 24 16" ><rect x="1" y="1" width="22" height="14" rx="2.5" fill="#fff" stroke="#3d8a3d" stroke-width="1.6"/><rect x="4" y="4.2" width="16" height="7.6" rx="1.5" fill="#0d8f0d"/></svg>
<div class="t" style="left:401px;top:1011px;color:#00f"><span class="c">删除</span></div>
<svg style="left:458px;top:1012px" width="26" height="24" viewBox="0 0 26 24" ><rect x="0.8" y="0.8" width="21.5" height="18" rx="1" fill="#fbfcfe" stroke="#7f9fd0" stroke-width="1.5"/><rect x="1.5" y="1.5" width="20" height="3.4" fill="#a9c6ef"/><path d="M21 6 L24.5 9 L12 21 L7.5 23 L8.8 18 Z" fill="#f6cf6a" stroke="#c98f2b" stroke-width="1"/><path d="M8.8 18 L12 21 L7.5 23 Z" fill="#b0702a"/></svg>
<div class="t" style="left:488px;top:1011px;color:#00f"><span class="c">设计</span></div>
<svg style="left:544px;top:1011px" width="24" height="24" viewBox="0 0 24 24" ><rect x="0.8" y="0.8" width="19" height="17" fill="#f4f8fd" stroke="#8aa9d6" stroke-width="1.4"/><rect x="1.5" y="1.5" width="17.6" height="3" fill="#a9c6ef"/><path d="M3 7.5 H6 M3 10.5 H6 M3 13.5 H6" stroke="#8aa9d6" stroke-width="1.2"/><path d="M8 7.5 H17" stroke="#9bc48b" stroke-width="1.4"/><path d="M8 9 H22.5 V20 H18 L15.5 23 L13 20 H8 Z" fill="#e9e9e9" stroke="#a9a9a9" stroke-width="1.1"/></svg>
<div class="t" style="left:574px;top:1011px;color:#00f"><span class="c">排序设置</span></div>
<svg style="left:666px;top:1011px" width="25" height="24" viewBox="0 0 25 24" ><path d="M2.5 20.5 L12.5 10" stroke="#4f86d2" stroke-width="5.6" stroke-linecap="round"/><path d="M3.2 19.3 L11.5 10.6" stroke="#9cc3f2" stroke-width="2" stroke-linecap="round"/><path d="M12 10.5 C9.5 6 13 1 18 1.2 L15.5 4.5 L17 7.5 L20.5 7.8 L23 4.5 C24.5 9 20.5 13.5 15.5 12.5 Z" fill="#c9c9c9" stroke="#8f8f8f" stroke-width="0.9"/></svg>
<div class="t" style="left:696px;top:1011px;color:#00f"><span class="c">列设置</span></div>
<div class="sep" style="left:361px;top:1005px;width:2px;height:36px;"></div>
<div class="sep" style="left:447px;top:1005px;width:2px;height:36px;"></div>
<div class="sep" style="left:533px;top:1005px;width:2px;height:36px;"></div>
<div class="sep" style="left:655px;top:1005px;width:2px;height:36px;"></div>
<div class="gh" style="left:274px;top:1046px;width:2174px;height:38px;border-top:1px solid #ddd;border-bottom:1px solid #ddd"></div>
<div style="left:274px;top:1084px;width:2174px;height:261px;background:#fff"></div>
<div class="vline" style="left:319px;top:1047px;width:0px;height:36px;"></div>
<div class="vline" style="left:361px;top:1047px;width:0px;height:36px;"></div>
<div class="vline" style="left:480px;top:1047px;width:0px;height:36px;"></div>
<div class="vline" style="left:579px;top:1047px;width:0px;height:36px;"></div>
<div class="vline" style="left:677px;top:1047px;width:0px;height:36px;"></div>
<div class="vline" style="left:776px;top:1047px;width:0px;height:36px;"></div>
<div class="vline" style="left:874px;top:1047px;width:0px;height:36px;"></div>
<div class="vline" style="left:985px;top:1047px;width:0px;height:36px;"></div>
<div class="vline" style="left:1080px;top:1047px;width:0px;height:36px;"></div>
<div class="vline" style="left:1137px;top:1047px;width:0px;height:36px;"></div>
<div class="vline" style="left:1186px;top:1047px;width:0px;height:36px;"></div>
<div class="vline" style="left:1251px;top:1047px;width:0px;height:36px;"></div>
<div class="vline" style="left:1380px;top:1047px;width:0px;height:36px;"></div>
<div class="vline" style="left:1463px;top:1047px;width:0px;height:36px;"></div>
<div class="vline" style="left:1544px;top:1047px;width:0px;height:36px;"></div>
<div class="vline" style="left:1642px;top:1047px;width:0px;height:36px;"></div>
<div class="vline" style="left:1750px;top:1047px;width:0px;height:36px;"></div>
<div class="vline" style="left:1818px;top:1047px;width:0px;height:36px;"></div>
<div class="vline" style="left:1917px;top:1047px;width:0px;height:36px;"></div>
<div class="vline" style="left:2015px;top:1047px;width:0px;height:36px;"></div>
<div class="vline" style="left:2084px;top:1047px;width:0px;height:36px;"></div>
<div class="vline" style="left:2146px;top:1047px;width:0px;height:36px;"></div>
<div class="vline" style="left:2245px;top:1047px;width:0px;height:36px;"></div>
<div class="vline" style="left:2313px;top:1047px;width:0px;height:36px;"></div>
<div class="vline" style="left:2412px;top:1047px;width:0px;height:36px;"></div>
<div class="vline" style="left:2472px;top:1047px;width:0px;height:36px;"></div>
<div class="ck" style="left:329px;top:1054px;width:22px;height:22px;"></div>
<div class="cell" style="left:362px;top:1053px;width:118px;text-align:center;padding:0 6px"><span class="c1">操作</span></div>
<div class="cell" style="left:481px;top:1053px;width:98px;text-align:center;padding:0 6px"><span class="c1">工资部门</span><span style="display:inline-block;position:relative;width:20px;height:16px;vertical-align:-1px"><svg style="left:7px;top:0px" width="13" height="16" viewBox="0 0 13 16" ><path d="M0.3 6.6 L6.5 0.2 L12.7 6.6 Z" fill="#c4c4c4"/><path d="M0.3 9.4 L6.5 15.8 L12.7 9.4 Z" fill="#c4c4c4"/></svg></span></div>
<div class="cell" style="left:580px;top:1053px;width:97px;text-align:center;padding:0 6px"><span class="c1">分组</span></div>
<div class="cell" style="left:678px;top:1053px;width:98px;text-align:center;padding:0 6px"><span class="c1">分组</span>ID</div>
<div class="cell" style="left:777px;top:1053px;width:97px;text-align:center;padding:0 6px">ID<span style="display:inline-block;position:relative;width:20px;height:16px;vertical-align:-1px"><svg style="left:7px;top:0px" width="13" height="16" viewBox="0 0 13 16" ><path d="M0.3 6.6 L6.5 0.2 L12.7 6.6 Z" fill="#c4c4c4"/><path d="M0.3 9.4 L6.5 15.8 L12.7 9.4 Z" fill="#c4c4c4"/></svg></span></div>
<div class="cell" style="left:875px;top:1053px;width:110px;text-align:center;padding:0 6px"><span class="c1">工资日期</span><span style="display:inline-block;position:relative;width:20px;height:16px;vertical-align:-1px"><svg style="left:7px;top:0px" width="13" height="16" viewBox="0 0 13 16" ><path d="M0.3 6.6 L6.5 0.2 L12.7 6.6 Z" fill="#c4c4c4"/><path d="M0.3 9.4 L6.5 15.8 L12.7 9.4 Z" fill="#c4c4c4"/></svg></span></div>
<div class="cell" style="left:986px;top:1053px;width:94px;text-align:center;padding:0 6px"><span class="c1">工龄</span></div>
<div class="cell" style="left:1081px;top:1053px;width:56px;text-align:left;padding:0 6px"><span class="c1">年份</span><span style="display:inline-block;position:relative;width:20px;height:16px;vertical-align:-1px"><svg style="left:7px;top:0px" width="13" height="16" viewBox="0 0 13 16" ><path d="M0.3 6.6 L6.5 0.2 L12.7 6.6 Z" fill="#c4c4c4"/><path d="M0.3 9.4 L6.5 15.8 L12.7 9.4 Z" fill="#c4c4c4"/></svg></span></div>
<div class="cell" style="left:1138px;top:1053px;width:48px;text-align:center;padding:0 6px"><span class="c1">月份</span></div>
<div class="cell" style="left:1187px;top:1053px;width:64px;text-align:center;padding:0 6px"><span class="c1">帐套</span>ID</div>
<div class="cell" style="left:1252px;top:1053px;width:128px;text-align:center;padding:0 6px"><span class="c1">人员</span>ID</div>
<div class="cell" style="left:1381px;top:1053px;width:82px;text-align:center;padding:0 6px"><span class="c1">姓名</span><span style="display:inline-block;position:relative;width:20px;height:16px;vertical-align:-1px"><svg style="left:7px;top:0px" width="13" height="16" viewBox="0 0 13 16" ><path d="M0.3 6.6 L6.5 0.2 L12.7 6.6 Z" fill="#c4c4c4"/><path d="M0.3 9.4 L6.5 15.8 L12.7 9.4 Z" fill="#c4c4c4"/></svg></span></div>
<div class="cell" style="left:1464px;top:1053px;width:80px;text-align:center;padding:0 6px"><span class="c1">职务</span></div>
<div class="cell" style="left:1545px;top:1053px;width:97px;text-align:center;padding:0 6px"><span class="c1">身份证号</span></div>
<div class="cell" style="left:1643px;top:1053px;width:107px;text-align:center;padding:0 6px"><span class="c1">账号</span></div>
<div class="cell" style="left:1751px;top:1053px;width:67px;text-align:left;padding:0 6px"><span class="c1">基本工资</span></div>
<div class="cell" style="left:1819px;top:1053px;width:98px;text-align:center;padding:0 6px"><span class="c1">职称补贴</span></div>
<div class="cell" style="left:1918px;top:1053px;width:97px;text-align:center;padding:0 6px"><span class="c1">岗位工资</span></div>
<div class="cell" style="left:2016px;top:1053px;width:68px;text-align:left;padding:0 6px"><span class="c1">绩效工资</span></div>
<div class="cell" style="left:2085px;top:1053px;width:61px;text-align:left;padding:0 6px"><span class="c1">交通补贴</span></div>
<div class="cell" style="left:2147px;top:1053px;width:98px;text-align:center;padding:0 6px"><span class="c1">津贴</span></div>
<div class="cell" style="left:2246px;top:1053px;width:67px;text-align:left;padding:0 6px"><span class="c1">电话补贴</span></div>
<div class="cell" style="left:2314px;top:1053px;width:98px;text-align:center;padding:0 6px"><span class="c1">考勤</span></div>
<div class="cell" style="left:2413px;top:1053px;width:59px;text-align:center;padding:0 6px"><span class="c1">扣款</span></div>
<div style="left:274px;top:1084px;width:2174px;height:256px;overflow:hidden">
<div class="hline" style="left:46px;top:37px;width:2153px;height:0px;"></div>
<div class="hline" style="left:46px;top:75px;width:2153px;height:0px;"></div>
<div class="hline" style="left:46px;top:113px;width:2153px;height:0px;"></div>
<div class="hline" style="left:46px;top:151px;width:2153px;height:0px;"></div>
<div class="hline" style="left:46px;top:189px;width:2153px;height:0px;"></div>
<div class="hline" style="left:46px;top:227px;width:2153px;height:0px;"></div>
<div class="hline" style="left:46px;top:265px;width:2153px;height:0px;"></div>
<div class="vline" style="left:87px;top:0px;width:0px;height:266px;"></div>
<div class="vline" style="left:206px;top:0px;width:0px;height:266px;"></div>
<div class="vline" style="left:305px;top:0px;width:0px;height:266px;"></div>
<div class="vline" style="left:403px;top:0px;width:0px;height:266px;"></div>
<div class="vline" style="left:502px;top:0px;width:0px;height:266px;"></div>
<div class="vline" style="left:600px;top:0px;width:0px;height:266px;"></div>
<div class="vline" style="left:711px;top:0px;width:0px;height:266px;"></div>
<div class="vline" style="left:806px;top:0px;width:0px;height:266px;"></div>
<div class="vline" style="left:863px;top:0px;width:0px;height:266px;"></div>
<div class="vline" style="left:912px;top:0px;width:0px;height:266px;"></div>
<div class="vline" style="left:977px;top:0px;width:0px;height:266px;"></div>
<div class="vline" style="left:1106px;top:0px;width:0px;height:266px;"></div>
<div class="vline" style="left:1189px;top:0px;width:0px;height:266px;"></div>
<div class="vline" style="left:1270px;top:0px;width:0px;height:266px;"></div>
<div class="vline" style="left:1368px;top:0px;width:0px;height:266px;"></div>
<div class="vline" style="left:1476px;top:0px;width:0px;height:266px;"></div>
<div class="vline" style="left:1544px;top:0px;width:0px;height:266px;"></div>
<div class="vline" style="left:1643px;top:0px;width:0px;height:266px;"></div>
<div class="vline" style="left:1741px;top:0px;width:0px;height:266px;"></div>
<div class="vline" style="left:1810px;top:0px;width:0px;height:266px;"></div>
<div class="vline" style="left:1872px;top:0px;width:0px;height:266px;"></div>
<div class="vline" style="left:1971px;top:0px;width:0px;height:266px;"></div>
<div class="vline" style="left:2039px;top:0px;width:0px;height:266px;"></div>
<div class="vline" style="left:2138px;top:0px;width:0px;height:266px;"></div>
<div class="vline" style="left:2198px;top:0px;width:0px;height:266px;"></div>
<div style="left:0px;top:0.0px;width:45px;height:37.5px;background:linear-gradient(to bottom,#F9F9F9,#efefef)"></div>
<div class="hline" style="left:0px;top:37px;width:46px;height:0px;"></div>
<div class="cell" style="left:0;top:5.5px;width:45px;text-align:center">1</div>
<div style="left:0px;top:37.5px;width:45px;height:37.5px;background:linear-gradient(to bottom,#F9F9F9,#efefef)"></div>
<div class="hline" style="left:0px;top:74px;width:46px;height:0px;"></div>
<div class="cell" style="left:0;top:43.0px;width:45px;text-align:center">2</div>
<div style="left:0px;top:75.0px;width:45px;height:37.5px;background:linear-gradient(to bottom,#F9F9F9,#efefef)"></div>
<div class="hline" style="left:0px;top:111px;width:46px;height:0px;"></div>
<div class="cell" style="left:0;top:80.5px;width:45px;text-align:center">3</div>
<div style="left:0px;top:112.5px;width:45px;height:37.5px;background:linear-gradient(to bottom,#F9F9F9,#efefef)"></div>
<div class="hline" style="left:0px;top:149px;width:46px;height:0px;"></div>
<div class="cell" style="left:0;top:118.0px;width:45px;text-align:center">4</div>
<div style="left:0px;top:150.0px;width:45px;height:37.5px;background:linear-gradient(to bottom,#F9F9F9,#efefef)"></div>
<div class="hline" style="left:0px;top:187px;width:46px;height:0px;"></div>
<div class="cell" style="left:0;top:155.5px;width:45px;text-align:center">5</div>
<div style="left:0px;top:187.5px;width:45px;height:37.5px;background:linear-gradient(to bottom,#F9F9F9,#efefef)"></div>
<div class="hline" style="left:0px;top:224px;width:46px;height:0px;"></div>
<div class="cell" style="left:0;top:193.0px;width:45px;text-align:center">6</div>
<div style="left:0px;top:225.0px;width:45px;height:37.5px;background:linear-gradient(to bottom,#F9F9F9,#efefef)"></div>
<div class="hline" style="left:0px;top:261px;width:46px;height:0px;"></div>
<div class="cell" style="left:0;top:230.5px;width:45px;text-align:center">7</div>
<div class="vline" style="left:45px;top:0px;width:0px;height:262.5px;"></div>
<div class="ck" style="left:55px;top:8px;width:22px;height:22px;"></div>
<svg style="left:113px;top:0px" width="30" height="30" viewBox="0 0 30 30" ><rect x="0" y="0" width="30" height="30" fill="#f4f4f4"/><path d="M16 7.3 H4.6 V24.6 H22.4 V15" fill="none" stroke="#5f8bad" stroke-width="2"/><path d="M20.5 3 L25.8 7.4 L11.2 22 L6.3 23.4 L7.2 18 Z" fill="#62c3ef" stroke="#4d80a6" stroke-width="1.5" stroke-linejoin="round"/><path d="M21 2.6 Q23.6 0.8 25.4 2.9 Q27.4 5 25.9 7.3" fill="#f4f4f4" stroke="#4d80a6" stroke-width="1.4"/><path d="M10.2 17.5 L20.5 7.2" stroke="#4d80a6" stroke-width="1"/><path d="M7.2 18 L6.3 23.4 L11.2 22" fill="#f4f4f4" stroke="#4d80a6" stroke-width="1.2" stroke-linejoin="round"/><path d="M6.5 22.9 H19.8" stroke="#5f8bad" stroke-width="1.4"/></svg>
<div class="cell" style="left:144px;top:12px">|</div>
<svg style="left:152px;top:0px" width="30" height="30" viewBox="0 0 30 30" ><rect x="0" y="0" width="30" height="30" fill="#f4f4f4"/><path d="M10 5.5 V0.8 H17.5 V5.5" fill="none" stroke="#c64a55" stroke-width="1.8"/><rect x="2.5" y="5.8" width="22" height="4" fill="#f5abab" stroke="#c64a55" stroke-width="1.6"/><path d="M4.5 10.5 L6.8 27 H16" fill="none" stroke="#c64a55" stroke-width="2"/><path d="M22.8 10.5 L22 16" fill="none" stroke="#c64a55" stroke-width="2"/><path d="M9.3 13 L10.3 23.5 M13.7 13 V23.5 M18 13 L17.6 17.5" stroke="#c64a55" stroke-width="1.6"/><path d="M22.3 15 V17.5" stroke="#c64a55" stroke-width="1.6"/><circle cx="22.3" cy="23" r="5.2" fill="#fbf3f3" stroke="#c64a55" stroke-width="1.7"/><path d="M20.2 20.9 L24.4 25.1 M24.4 20.9 L20.2 25.1" stroke="#c64a55" stroke-width="1.6"/></svg>
<div class="cell" style="left:404px;top:7px;width:98px;text-align:center;padding:0 6px">0</div>
<div class="cell" style="left:503px;top:7px;width:97px;text-align:left;padding:0 6px">61</div>
<div class="cell" style="left:601px;top:7px;width:110px;text-align:left;padding:0 6px">2025-11-07</div>
<div class="cell" style="left:712px;top:7px;width:94px;text-align:left;padding:0 6px">36.00</div>
<div class="cell" style="left:807px;top:7px;width:56px;text-align:left;padding:0 6px">2025</div>
<div class="cell" style="left:864px;top:7px;width:48px;text-align:left;padding:0 6px">11</div>
<div class="cell" style="left:913px;top:7px;width:64px;text-align:left;padding:0 6px">1</div>
<div class="cell" style="left:978px;top:7px;width:128px;text-align:left;padding:0 6px">1</div>
<div class="cell" style="left:1107px;top:7px;width:82px;text-align:left;padding:0 6px"><span class="c">张三</span></div>
<div class="cell" style="left:1271px;top:7px;width:97px;text-align:left;padding:0 6px">230104640101</div>
<div class="cell" style="left:1369px;top:7px;width:107px;text-align:left;padding:0 6px">11081020000001</div>
<div class="cell" style="left:1477px;top:7px;width:67px;text-align:left;padding:0 6px">0.00</div>
<div class="cell" style="left:1545px;top:7px;width:98px;text-align:left;padding:0 6px">0</div>
<div class="cell" style="left:1644px;top:7px;width:97px;text-align:center;padding:0 6px">0</div>
<div class="cell" style="left:1742px;top:7px;width:68px;text-align:left;padding:0 6px">0.00</div>
<div class="cell" style="left:1811px;top:7px;width:61px;text-align:left;padding:0 6px">0.00</div>
<div class="cell" style="left:1873px;top:7px;width:98px;text-align:center;padding:0 6px">0</div>
<div class="cell" style="left:1972px;top:7px;width:67px;text-align:left;padding:0 6px">0.00</div>
<div class="cell" style="left:2040px;top:7px;width:98px;text-align:center;padding:0 6px">0</div>
<div class="ck" style="left:55px;top:46px;width:22px;height:22px;"></div>
<svg style="left:113px;top:38px" width="30" height="30" viewBox="0 0 30 30" ><rect x="0" y="0" width="30" height="30" fill="#f4f4f4"/><path d="M16 7.3 H4.6 V24.6 H22.4 V15" fill="none" stroke="#5f8bad" stroke-width="2"/><path d="M20.5 3 L25.8 7.4 L11.2 22 L6.3 23.4 L7.2 18 Z" fill="#62c3ef" stroke="#4d80a6" stroke-width="1.5" stroke-linejoin="round"/><path d="M21 2.6 Q23.6 0.8 25.4 2.9 Q27.4 5 25.9 7.3" fill="#f4f4f4" stroke="#4d80a6" stroke-width="1.4"/><path d="M10.2 17.5 L20.5 7.2" stroke="#4d80a6" stroke-width="1"/><path d="M7.2 18 L6.3 23.4 L11.2 22" fill="#f4f4f4" stroke="#4d80a6" stroke-width="1.2" stroke-linejoin="round"/><path d="M6.5 22.9 H19.8" stroke="#5f8bad" stroke-width="1.4"/></svg>
<div class="cell" style="left:144px;top:50px">|</div>
<svg style="left:152px;top:38px" width="30" height="30" viewBox="0 0 30 30" ><rect x="0" y="0" width="30" height="30" fill="#f4f4f4"/><path d="M10 5.5 V0.8 H17.5 V5.5" fill="none" stroke="#c64a55" stroke-width="1.8"/><rect x="2.5" y="5.8" width="22" height="4" fill="#f5abab" stroke="#c64a55" stroke-width="1.6"/><path d="M4.5 10.5 L6.8 27 H16" fill="none" stroke="#c64a55" stroke-width="2"/><path d="M22.8 10.5 L22 16" fill="none" stroke="#c64a55" stroke-width="2"/><path d="M9.3 13 L10.3 23.5 M13.7 13 V23.5 M18 13 L17.6 17.5" stroke="#c64a55" stroke-width="1.6"/><path d="M22.3 15 V17.5" stroke="#c64a55" stroke-width="1.6"/><circle cx="22.3" cy="23" r="5.2" fill="#fbf3f3" stroke="#c64a55" stroke-width="1.7"/><path d="M20.2 20.9 L24.4 25.1 M24.4 20.9 L20.2 25.1" stroke="#c64a55" stroke-width="1.6"/></svg>
<div class="cell" style="left:306px;top:45px;width:97px;text-align:center;padding:0 6px"><span class="c">总部</span></div>
<div class="cell" style="left:404px;top:45px;width:98px;text-align:center;padding:0 6px">2</div>
<div class="cell" style="left:503px;top:45px;width:97px;text-align:left;padding:0 6px">59</div>
<div class="cell" style="left:601px;top:45px;width:110px;text-align:left;padding:0 6px">2025-11-07</div>
<div class="cell" style="left:712px;top:45px;width:94px;text-align:left;padding:0 6px">9.00</div>
<div class="cell" style="left:807px;top:45px;width:56px;text-align:left;padding:0 6px">2025</div>
<div class="cell" style="left:864px;top:45px;width:48px;text-align:left;padding:0 6px">11</div>
<div class="cell" style="left:913px;top:45px;width:64px;text-align:left;padding:0 6px">1</div>
<div class="cell" style="left:978px;top:45px;width:128px;text-align:left;padding:0 6px">7</div>
<div class="cell" style="left:1107px;top:45px;width:82px;text-align:left;padding:0 6px"><span class="c">诸葛亮</span></div>
<div class="cell" style="left:1477px;top:45px;width:67px;text-align:left;padding:0 6px">0.00</div>
<div class="cell" style="left:1545px;top:45px;width:98px;text-align:left;padding:0 6px">0</div>
<div class="cell" style="left:1644px;top:45px;width:97px;text-align:center;padding:0 6px">0</div>
<div class="cell" style="left:1742px;top:45px;width:68px;text-align:left;padding:0 6px">0.00</div>
<div class="cell" style="left:1811px;top:45px;width:61px;text-align:left;padding:0 6px">0.00</div>
<div class="cell" style="left:1873px;top:45px;width:98px;text-align:center;padding:0 6px">0</div>
<div class="cell" style="left:1972px;top:45px;width:67px;text-align:left;padding:0 6px">0.00</div>
<div class="cell" style="left:2040px;top:45px;width:98px;text-align:center;padding:0 6px">0</div>
<div class="ck" style="left:55px;top:84px;width:22px;height:22px;"></div>
<svg style="left:113px;top:76px" width="30" height="30" viewBox="0 0 30 30" ><rect x="0" y="0" width="30" height="30" fill="#f4f4f4"/><path d="M16 7.3 H4.6 V24.6 H22.4 V15" fill="none" stroke="#5f8bad" stroke-width="2"/><path d="M20.5 3 L25.8 7.4 L11.2 22 L6.3 23.4 L7.2 18 Z" fill="#62c3ef" stroke="#4d80a6" stroke-width="1.5" stroke-linejoin="round"/><path d="M21 2.6 Q23.6 0.8 25.4 2.9 Q27.4 5 25.9 7.3" fill="#f4f4f4" stroke="#4d80a6" stroke-width="1.4"/><path d="M10.2 17.5 L20.5 7.2" stroke="#4d80a6" stroke-width="1"/><path d="M7.2 18 L6.3 23.4 L11.2 22" fill="#f4f4f4" stroke="#4d80a6" stroke-width="1.2" stroke-linejoin="round"/><path d="M6.5 22.9 H19.8" stroke="#5f8bad" stroke-width="1.4"/></svg>
<div class="cell" style="left:144px;top:88px">|</div>
<svg style="left:152px;top:76px" width="30" height="30" viewBox="0 0 30 30" ><rect x="0" y="0" width="30" height="30" fill="#f4f4f4"/><path d="M10 5.5 V0.8 H17.5 V5.5" fill="none" stroke="#c64a55" stroke-width="1.8"/><rect x="2.5" y="5.8" width="22" height="4" fill="#f5abab" stroke="#c64a55" stroke-width="1.6"/><path d="M4.5 10.5 L6.8 27 H16" fill="none" stroke="#c64a55" stroke-width="2"/><path d="M22.8 10.5 L22 16" fill="none" stroke="#c64a55" stroke-width="2"/><path d="M9.3 13 L10.3 23.5 M13.7 13 V23.5 M18 13 L17.6 17.5" stroke="#c64a55" stroke-width="1.6"/><path d="M22.3 15 V17.5" stroke="#c64a55" stroke-width="1.6"/><circle cx="22.3" cy="23" r="5.2" fill="#fbf3f3" stroke="#c64a55" stroke-width="1.7"/><path d="M20.2 20.9 L24.4 25.1 M24.4 20.9 L20.2 25.1" stroke="#c64a55" stroke-width="1.6"/></svg>
<div class="cell" style="left:306px;top:83px;width:97px;text-align:center;padding:0 6px"><span class="c">总部</span></div>
<div class="cell" style="left:404px;top:83px;width:98px;text-align:center;padding:0 6px">2</div>
<div class="cell" style="left:503px;top:83px;width:97px;text-align:left;padding:0 6px">57</div>
<div class="cell" style="left:601px;top:83px;width:110px;text-align:left;padding:0 6px">2025-11-07</div>
<div class="cell" style="left:712px;top:83px;width:94px;text-align:left;padding:0 6px">11.00</div>
<div class="cell" style="left:807px;top:83px;width:56px;text-align:left;padding:0 6px">2025</div>
<div class="cell" style="left:864px;top:83px;width:48px;text-align:left;padding:0 6px">11</div>
<div class="cell" style="left:913px;top:83px;width:64px;text-align:left;padding:0 6px">1</div>
<div class="cell" style="left:978px;top:83px;width:128px;text-align:left;padding:0 6px">5</div>
<div class="cell" style="left:1107px;top:83px;width:82px;text-align:left;padding:0 6px"><span class="c">李四</span></div>
<div class="cell" style="left:1369px;top:83px;width:107px;text-align:left;padding:0 6px">11081020000002</div>
<div class="cell" style="left:1477px;top:83px;width:67px;text-align:left;padding:0 6px">0.00</div>
<div class="cell" style="left:1545px;top:83px;width:98px;text-align:left;padding:0 6px">0</div>
<div class="cell" style="left:1644px;top:83px;width:97px;text-align:center;padding:0 6px">0</div>
<div class="cell" style="left:1742px;top:83px;width:68px;text-align:left;padding:0 6px">0.00</div>
<div class="cell" style="left:1811px;top:83px;width:61px;text-align:left;padding:0 6px">0.00</div>
<div class="cell" style="left:1873px;top:83px;width:98px;text-align:center;padding:0 6px">0</div>
<div class="cell" style="left:1972px;top:83px;width:67px;text-align:left;padding:0 6px">0.00</div>
<div class="cell" style="left:2040px;top:83px;width:98px;text-align:center;padding:0 6px">0</div>
<div class="ck" style="left:55px;top:122px;width:22px;height:22px;"></div>
<svg style="left:113px;top:114px" width="30" height="30" viewBox="0 0 30 30" ><rect x="0" y="0" width="30" height="30" fill="#f4f4f4"/><path d="M16 7.3 H4.6 V24.6 H22.4 V15" fill="none" stroke="#5f8bad" stroke-width="2"/><path d="M20.5 3 L25.8 7.4 L11.2 22 L6.3 23.4 L7.2 18 Z" fill="#62c3ef" stroke="#4d80a6" stroke-width="1.5" stroke-linejoin="round"/><path d="M21 2.6 Q23.6 0.8 25.4 2.9 Q27.4 5 25.9 7.3" fill="#f4f4f4" stroke="#4d80a6" stroke-width="1.4"/><path d="M10.2 17.5 L20.5 7.2" stroke="#4d80a6" stroke-width="1"/><path d="M7.2 18 L6.3 23.4 L11.2 22" fill="#f4f4f4" stroke="#4d80a6" stroke-width="1.2" stroke-linejoin="round"/><path d="M6.5 22.9 H19.8" stroke="#5f8bad" stroke-width="1.4"/></svg>
<div class="cell" style="left:144px;top:126px">|</div>
<svg style="left:152px;top:114px" width="30" height="30" viewBox="0 0 30 30" ><rect x="0" y="0" width="30" height="30" fill="#f4f4f4"/><path d="M10 5.5 V0.8 H17.5 V5.5" fill="none" stroke="#c64a55" stroke-width="1.8"/><rect x="2.5" y="5.8" width="22" height="4" fill="#f5abab" stroke="#c64a55" stroke-width="1.6"/><path d="M4.5 10.5 L6.8 27 H16" fill="none" stroke="#c64a55" stroke-width="2"/><path d="M22.8 10.5 L22 16" fill="none" stroke="#c64a55" stroke-width="2"/><path d="M9.3 13 L10.3 23.5 M13.7 13 V23.5 M18 13 L17.6 17.5" stroke="#c64a55" stroke-width="1.6"/><path d="M22.3 15 V17.5" stroke="#c64a55" stroke-width="1.6"/><circle cx="22.3" cy="23" r="5.2" fill="#fbf3f3" stroke="#c64a55" stroke-width="1.7"/><path d="M20.2 20.9 L24.4 25.1 M24.4 20.9 L20.2 25.1" stroke="#c64a55" stroke-width="1.6"/></svg>
<div class="cell" style="left:306px;top:121px;width:97px;text-align:center;padding:0 6px"><span class="c">销售二部</span></div>
<div class="cell" style="left:404px;top:121px;width:98px;text-align:center;padding:0 6px">22</div>
<div class="cell" style="left:503px;top:121px;width:97px;text-align:left;padding:0 6px">58</div>
<div class="cell" style="left:601px;top:121px;width:110px;text-align:left;padding:0 6px">2025-11-07</div>
<div class="cell" style="left:712px;top:121px;width:94px;text-align:left;padding:0 6px">12.00</div>
<div class="cell" style="left:807px;top:121px;width:56px;text-align:left;padding:0 6px">2025</div>
<div class="cell" style="left:864px;top:121px;width:48px;text-align:left;padding:0 6px">11</div>
<div class="cell" style="left:913px;top:121px;width:64px;text-align:left;padding:0 6px">1</div>
<div class="cell" style="left:978px;top:121px;width:128px;text-align:left;padding:0 6px">6</div>
<div class="cell" style="left:1107px;top:121px;width:82px;text-align:left;padding:0 6px"><span class="c">孙尚香</span></div>
<div class="cell" style="left:1477px;top:121px;width:67px;text-align:left;padding:0 6px">0.00</div>
<div class="cell" style="left:1545px;top:121px;width:98px;text-align:left;padding:0 6px">0</div>
<div class="cell" style="left:1644px;top:121px;width:97px;text-align:center;padding:0 6px">0</div>
<div class="cell" style="left:1742px;top:121px;width:68px;text-align:left;padding:0 6px">0.00</div>
<div class="cell" style="left:1811px;top:121px;width:61px;text-align:left;padding:0 6px">0.00</div>
<div class="cell" style="left:1873px;top:121px;width:98px;text-align:center;padding:0 6px">0</div>
<div class="cell" style="left:1972px;top:121px;width:67px;text-align:left;padding:0 6px">0.00</div>
<div class="cell" style="left:2040px;top:121px;width:98px;text-align:center;padding:0 6px">0</div>
<div class="ck" style="left:55px;top:160px;width:22px;height:22px;"></div>
<svg style="left:113px;top:152px" width="30" height="30" viewBox="0 0 30 30" ><rect x="0" y="0" width="30" height="30" fill="#f4f4f4"/><path d="M16 7.3 H4.6 V24.6 H22.4 V15" fill="none" stroke="#5f8bad" stroke-width="2"/><path d="M20.5 3 L25.8 7.4 L11.2 22 L6.3 23.4 L7.2 18 Z" fill="#62c3ef" stroke="#4d80a6" stroke-width="1.5" stroke-linejoin="round"/><path d="M21 2.6 Q23.6 0.8 25.4 2.9 Q27.4 5 25.9 7.3" fill="#f4f4f4" stroke="#4d80a6" stroke-width="1.4"/><path d="M10.2 17.5 L20.5 7.2" stroke="#4d80a6" stroke-width="1"/><path d="M7.2 18 L6.3 23.4 L11.2 22" fill="#f4f4f4" stroke="#4d80a6" stroke-width="1.2" stroke-linejoin="round"/><path d="M6.5 22.9 H19.8" stroke="#5f8bad" stroke-width="1.4"/></svg>
<div class="cell" style="left:144px;top:164px">|</div>
<svg style="left:152px;top:152px" width="30" height="30" viewBox="0 0 30 30" ><rect x="0" y="0" width="30" height="30" fill="#f4f4f4"/><path d="M10 5.5 V0.8 H17.5 V5.5" fill="none" stroke="#c64a55" stroke-width="1.8"/><rect x="2.5" y="5.8" width="22" height="4" fill="#f5abab" stroke="#c64a55" stroke-width="1.6"/><path d="M4.5 10.5 L6.8 27 H16" fill="none" stroke="#c64a55" stroke-width="2"/><path d="M22.8 10.5 L22 16" fill="none" stroke="#c64a55" stroke-width="2"/><path d="M9.3 13 L10.3 23.5 M13.7 13 V23.5 M18 13 L17.6 17.5" stroke="#c64a55" stroke-width="1.6"/><path d="M22.3 15 V17.5" stroke="#c64a55" stroke-width="1.6"/><circle cx="22.3" cy="23" r="5.2" fill="#fbf3f3" stroke="#c64a55" stroke-width="1.7"/><path d="M20.2 20.9 L24.4 25.1 M24.4 20.9 L20.2 25.1" stroke="#c64a55" stroke-width="1.6"/></svg>
<div class="cell" style="left:306px;top:159px;width:97px;text-align:center;padding:0 6px"><span class="c">行政办</span></div>
<div class="cell" style="left:404px;top:159px;width:98px;text-align:center;padding:0 6px">16</div>
<div class="cell" style="left:503px;top:159px;width:97px;text-align:left;padding:0 6px">64</div>
<div class="cell" style="left:601px;top:159px;width:110px;text-align:left;padding:0 6px">2025-11-07</div>
<div class="cell" style="left:712px;top:159px;width:94px;text-align:left;padding:0 6px">16.00</div>
<div class="cell" style="left:807px;top:159px;width:56px;text-align:left;padding:0 6px">2025</div>
<div class="cell" style="left:864px;top:159px;width:48px;text-align:left;padding:0 6px">11</div>
<div class="cell" style="left:913px;top:159px;width:64px;text-align:left;padding:0 6px">1</div>
<div class="cell" style="left:978px;top:159px;width:128px;text-align:left;padding:0 6px">4</div>
<div class="cell" style="left:1107px;top:159px;width:82px;text-align:left;padding:0 6px"><span class="c">司马懿</span></div>
<div class="cell" style="left:1369px;top:159px;width:107px;text-align:left;padding:0 6px">95580101000001</div>
<div class="cell" style="left:1477px;top:159px;width:67px;text-align:left;padding:0 6px">0.00</div>
<div class="cell" style="left:1545px;top:159px;width:98px;text-align:left;padding:0 6px">0</div>
<div class="cell" style="left:1644px;top:159px;width:97px;text-align:center;padding:0 6px">0</div>
<div class="cell" style="left:1742px;top:159px;width:68px;text-align:left;padding:0 6px">0.00</div>
<div class="cell" style="left:1811px;top:159px;width:61px;text-align:left;padding:0 6px">0.00</div>
<div class="cell" style="left:1873px;top:159px;width:98px;text-align:center;padding:0 6px">0</div>
<div class="cell" style="left:1972px;top:159px;width:67px;text-align:left;padding:0 6px">0.00</div>
<div class="cell" style="left:2040px;top:159px;width:98px;text-align:center;padding:0 6px">0</div>
<div class="ck" style="left:55px;top:198px;width:22px;height:22px;"></div>
<svg style="left:113px;top:190px" width="30" height="30" viewBox="0 0 30 30" ><rect x="0" y="0" width="30" height="30" fill="#f4f4f4"/><path d="M16 7.3 H4.6 V24.6 H22.4 V15" fill="none" stroke="#5f8bad" stroke-width="2"/><path d="M20.5 3 L25.8 7.4 L11.2 22 L6.3 23.4 L7.2 18 Z" fill="#62c3ef" stroke="#4d80a6" stroke-width="1.5" stroke-linejoin="round"/><path d="M21 2.6 Q23.6 0.8 25.4 2.9 Q27.4 5 25.9 7.3" fill="#f4f4f4" stroke="#4d80a6" stroke-width="1.4"/><path d="M10.2 17.5 L20.5 7.2" stroke="#4d80a6" stroke-width="1"/><path d="M7.2 18 L6.3 23.4 L11.2 22" fill="#f4f4f4" stroke="#4d80a6" stroke-width="1.2" stroke-linejoin="round"/><path d="M6.5 22.9 H19.8" stroke="#5f8bad" stroke-width="1.4"/></svg>
<div class="cell" style="left:144px;top:202px">|</div>
<svg style="left:152px;top:190px" width="30" height="30" viewBox="0 0 30 30" ><rect x="0" y="0" width="30" height="30" fill="#f4f4f4"/><path d="M10 5.5 V0.8 H17.5 V5.5" fill="none" stroke="#c64a55" stroke-width="1.8"/><rect x="2.5" y="5.8" width="22" height="4" fill="#f5abab" stroke="#c64a55" stroke-width="1.6"/><path d="M4.5 10.5 L6.8 27 H16" fill="none" stroke="#c64a55" stroke-width="2"/><path d="M22.8 10.5 L22 16" fill="none" stroke="#c64a55" stroke-width="2"/><path d="M9.3 13 L10.3 23.5 M13.7 13 V23.5 M18 13 L17.6 17.5" stroke="#c64a55" stroke-width="1.6"/><path d="M22.3 15 V17.5" stroke="#c64a55" stroke-width="1.6"/><circle cx="22.3" cy="23" r="5.2" fill="#fbf3f3" stroke="#c64a55" stroke-width="1.7"/><path d="M20.2 20.9 L24.4 25.1 M24.4 20.9 L20.2 25.1" stroke="#c64a55" stroke-width="1.6"/></svg>
<div class="cell" style="left:306px;top:197px;width:97px;text-align:center;padding:0 6px"><span class="c">行政办</span></div>
<div class="cell" style="left:404px;top:197px;width:98px;text-align:center;padding:0 6px">16</div>
<div class="cell" style="left:503px;top:197px;width:97px;text-align:left;padding:0 6px">63</div>
<div class="cell" style="left:601px;top:197px;width:110px;text-align:left;padding:0 6px">2025-11-07</div>
<div class="cell" style="left:712px;top:197px;width:94px;text-align:left;padding:0 6px">16.00</div>
<div class="cell" style="left:807px;top:197px;width:56px;text-align:left;padding:0 6px">2025</div>
<div class="cell" style="left:864px;top:197px;width:48px;text-align:left;padding:0 6px">11</div>
<div class="cell" style="left:913px;top:197px;width:64px;text-align:left;padding:0 6px">1</div>
<div class="cell" style="left:978px;top:197px;width:128px;text-align:left;padding:0 6px">3</div>
<div class="cell" style="left:1107px;top:197px;width:82px;text-align:left;padding:0 6px"><span class="c">赵云</span></div>
<div class="cell" style="left:1369px;top:197px;width:107px;text-align:left;padding:0 6px">95580101000002</div>
<div class="cell" style="left:1477px;top:197px;width:67px;text-align:left;padding:0 6px">0.00</div>
<div class="cell" style="left:1545px;top:197px;width:98px;text-align:left;padding:0 6px">0</div>
<div class="cell" style="left:1644px;top:197px;width:97px;text-align:center;padding:0 6px">0</div>
<div class="cell" style="left:1742px;top:197px;width:68px;text-align:left;padding:0 6px">0.00</div>
<div class="cell" style="left:1811px;top:197px;width:61px;text-align:left;padding:0 6px">0.00</div>
<div class="cell" style="left:1873px;top:197px;width:98px;text-align:center;padding:0 6px">0</div>
<div class="cell" style="left:1972px;top:197px;width:67px;text-align:left;padding:0 6px">0.00</div>
<div class="cell" style="left:2040px;top:197px;width:98px;text-align:center;padding:0 6px">0</div>
<div class="ck" style="left:55px;top:236px;width:22px;height:22px;"></div>
<svg style="left:113px;top:228px" width="30" height="30" viewBox="0 0 30 30" ><rect x="0" y="0" width="30" height="30" fill="#f4f4f4"/><path d="M16 7.3 H4.6 V24.6 H22.4 V15" fill="none" stroke="#5f8bad" stroke-width="2"/><path d="M20.5 3 L25.8 7.4 L11.2 22 L6.3 23.4 L7.2 18 Z" fill="#62c3ef" stroke="#4d80a6" stroke-width="1.5" stroke-linejoin="round"/><path d="M21 2.6 Q23.6 0.8 25.4 2.9 Q27.4 5 25.9 7.3" fill="#f4f4f4" stroke="#4d80a6" stroke-width="1.4"/><path d="M10.2 17.5 L20.5 7.2" stroke="#4d80a6" stroke-width="1"/><path d="M7.2 18 L6.3 23.4 L11.2 22" fill="#f4f4f4" stroke="#4d80a6" stroke-width="1.2" stroke-linejoin="round"/><path d="M6.5 22.9 H19.8" stroke="#5f8bad" stroke-width="1.4"/></svg>
<div class="cell" style="left:144px;top:240px">|</div>
<svg style="left:152px;top:228px" width="30" height="30" viewBox="0 0 30 30" ><rect x="0" y="0" width="30" height="30" fill="#f4f4f4"/><path d="M10 5.5 V0.8 H17.5 V5.5" fill="none" stroke="#c64a55" stroke-width="1.8"/><rect x="2.5" y="5.8" width="22" height="4" fill="#f5abab" stroke="#c64a55" stroke-width="1.6"/><path d="M4.5 10.5 L6.8 27 H16" fill="none" stroke="#c64a55" stroke-width="2"/><path d="M22.8 10.5 L22 16" fill="none" stroke="#c64a55" stroke-width="2"/><path d="M9.3 13 L10.3 23.5 M13.7 13 V23.5 M18 13 L17.6 17.5" stroke="#c64a55" stroke-width="1.6"/><path d="M22.3 15 V17.5" stroke="#c64a55" stroke-width="1.6"/><circle cx="22.3" cy="23" r="5.2" fill="#fbf3f3" stroke="#c64a55" stroke-width="1.7"/><path d="M20.2 20.9 L24.4 25.1 M24.4 20.9 L20.2 25.1" stroke="#c64a55" stroke-width="1.6"/></svg>
<div class="cell" style="left:306px;top:235px;width:97px;text-align:center;padding:0 6px"><span class="c">行政办</span></div>
<div class="cell" style="left:404px;top:235px;width:98px;text-align:center;padding:0 6px">16</div>
<div class="cell" style="left:503px;top:235px;width:97px;text-align:left;padding:0 6px">62</div>
<div class="cell" style="left:601px;top:235px;width:110px;text-align:left;padding:0 6px">2025-11-07</div>
<div class="cell" style="left:712px;top:235px;width:94px;text-align:left;padding:0 6px">16.00</div>
<div class="cell" style="left:807px;top:235px;width:56px;text-align:left;padding:0 6px">2025</div>
<div class="cell" style="left:864px;top:235px;width:48px;text-align:left;padding:0 6px">11</div>
<div class="cell" style="left:913px;top:235px;width:64px;text-align:left;padding:0 6px">1</div>
<div class="cell" style="left:978px;top:235px;width:128px;text-align:left;padding:0 6px">2</div>
<div class="cell" style="left:1107px;top:235px;width:82px;text-align:left;padding:0 6px"><span class="c">王五</span></div>
<div class="cell" style="left:1477px;top:235px;width:67px;text-align:left;padding:0 6px">0.00</div>
<div class="cell" style="left:1545px;top:235px;width:98px;text-align:left;padding:0 6px">0</div>
<div class="cell" style="left:1644px;top:235px;width:97px;text-align:center;padding:0 6px">0</div>
<div class="cell" style="left:1742px;top:235px;width:68px;text-align:left;padding:0 6px">0.00</div>
<div class="cell" style="left:1811px;top:235px;width:61px;text-align:left;padding:0 6px">0.00</div>
<div class="cell" style="left:1873px;top:235px;width:98px;text-align:center;padding:0 6px">0</div>
<div class="cell" style="left:1972px;top:235px;width:67px;text-align:left;padding:0 6px">0.00</div>
<div class="cell" style="left:2040px;top:235px;width:98px;text-align:center;padding:0 6px">0</div>
</div>
<div style="left:275px;top:1340px;width:2173px;height:1px;background:#ddd"></div>
<div class="vline" style="left:319px;top:1341px;width:0px;height:4px;"></div>
<div class="vline" style="left:361px;top:1341px;width:0px;height:4px;"></div>
<div class="vline" style="left:480px;top:1341px;width:0px;height:4px;"></div>
<div class="vline" style="left:579px;top:1341px;width:0px;height:4px;"></div>
<div class="vline" style="left:677px;top:1341px;width:0px;height:4px;"></div>
<div class="vline" style="left:776px;top:1341px;width:0px;height:4px;"></div>
<div class="vline" style="left:874px;top:1341px;width:0px;height:4px;"></div>
<div class="vline" style="left:985px;top:1341px;width:0px;height:4px;"></div>
<div class="vline" style="left:1080px;top:1341px;width:0px;height:4px;"></div>
<div class="vline" style="left:1137px;top:1341px;width:0px;height:4px;"></div>
<div class="vline" style="left:1186px;top:1341px;width:0px;height:4px;"></div>
<div class="vline" style="left:1251px;top:1341px;width:0px;height:4px;"></div>
<div class="vline" style="left:1380px;top:1341px;width:0px;height:4px;"></div>
<div class="vline" style="left:1463px;top:1341px;width:0px;height:4px;"></div>
<div class="vline" style="left:1544px;top:1341px;width:0px;height:4px;"></div>
<div class="vline" style="left:1642px;top:1341px;width:0px;height:4px;"></div>
<div class="vline" style="left:1750px;top:1341px;width:0px;height:4px;"></div>
<div class="vline" style="left:1818px;top:1341px;width:0px;height:4px;"></div>
<div class="vline" style="left:1917px;top:1341px;width:0px;height:4px;"></div>
<div class="vline" style="left:2015px;top:1341px;width:0px;height:4px;"></div>
<div class="vline" style="left:2084px;top:1341px;width:0px;height:4px;"></div>
<div class="vline" style="left:2146px;top:1341px;width:0px;height:4px;"></div>
<div class="vline" style="left:2245px;top:1341px;width:0px;height:4px;"></div>
<div class="vline" style="left:2313px;top:1341px;width:0px;height:4px;"></div>
<div class="vline" style="left:2412px;top:1341px;width:0px;height:4px;"></div>
<div style="left:320px;top:1315px;width:2111px;height:26px;background:#f1f1f1"></div>
<div style="left:345px;top:1318px;width:723px;height:20px;background:#c1c1c1"></div>
<svg style="left:329px;top:1321px" width="7" height="13" viewBox="0 0 7 13" ><path d="M7 0 V13 L0 6.5 Z" fill="#a3a3a3"/></svg>
<svg style="left:2416px;top:1321px" width="7" height="13" viewBox="0 0 7 13" ><path d="M0 0 V13 L7 6.5 Z" fill="#505050"/></svg>
<div style="left:2431px;top:1084px;width:17px;height:231px;background:#f1f1f1"></div>
<div style="left:2433px;top:1109px;width:15px;height:138px;background:#c1c1c1"></div>
<svg style="left:2438px;top:1093px" width="11" height="6" viewBox="0 0 11 6" ><path d="M0 6 L5.5 0 L11 6 Z" fill="#a3a3a3"/></svg>
<svg style="left:2438px;top:1299px" width="11" height="6" viewBox="0 0 11 6" ><path d="M0 0 L5.5 6 L11 0 Z" fill="#505050"/></svg>
<div style="left:2431px;top:1315px;width:17px;height:26px;background:#dcdcdc"></div>
<svg style="left:2409px;top:1006px" width="60" height="60" viewBox="0 0 60 60" ><defs><linearGradient id="avb" x1="0" y1="0" x2="0" y2="1"><stop offset="0" stop-color="#ffffff"/><stop offset="0.45" stop-color="#e6eeff"/><stop offset="1" stop-color="#bcd2fb"/></linearGradient><linearGradient id="avh" x1="0" y1="0" x2="1" y2="0"><stop offset="0" stop-color="#2e2320"/><stop offset="0.5" stop-color="#5a4640"/><stop offset="1" stop-color="#3a2c28"/></linearGradient><radialGradient id="avs" cx="0.5" cy="0.45" r="0.6"><stop offset="0" stop-color="#fdeee8"/><stop offset="1" stop-color="#f0c9bb"/></radialGradient><clipPath id="avc"><circle cx="29" cy="29" r="28.6"/></clipPath></defs><circle cx="29.5" cy="30" r="29.5" fill="#000" opacity="0.07"/><circle cx="29" cy="29" r="29" fill="url(#avb)"/><g clip-path="url(#avc)"><path d="M13 58 C15 53 20 52 27 51.5 L43 51.5 C50 52 54 54 56 58 Z" fill="#1d1d1d"/><path d="M24 44 H37 V53 C34 57 27 57 24 53 Z" fill="#f2cdbd"/><path d="M9.5 44 C8 24 14 5 33 3.5 C50 3 58 18 56 44 L48 46 L46 16 L22 16 L18 46.5 Z" fill="url(#avh)"/><path d="M19.3 30 C19 20 25 15.5 34 15.5 C44 15.5 49 21 48.5 31 C48 40 42 46.5 34 46.5 C26 46.5 19.6 40 19.3 30 Z" fill="url(#avs)"/><path d="M10 44 C9 26 15 8 33 5 C27 10 22 20 20.5 32 L18.2 46.5 Z" fill="url(#avh)"/><path d="M34.5 5 C42 9 46.5 18 47.5 30 L48.5 45 L56 43 C58 20 50 5 34.5 5 Z" fill="url(#avh)"/><path d="M20.5 26 Q24.5 23 29 25.2" stroke="#3a2a25" stroke-width="1.1" fill="none"/><path d="M39 25.2 Q43 23 47 26" stroke="#3a2a25" stroke-width="1.1" fill="none"/><ellipse cx="24.4" cy="30.6" rx="3.6" ry="3" fill="#dfe3ea"/><ellipse cx="24.8" cy="30.7" rx="2.7" ry="2.8" fill="#2a1715"/><circle cx="23.8" cy="29.8" r="0.8" fill="#fff"/><ellipse cx="43" cy="30.6" rx="3.6" ry="3" fill="#dfe3ea"/><ellipse cx="42.6" cy="30.7" rx="2.7" ry="2.8" fill="#2a1715"/><ellipse cx="23" cy="36" rx="3" ry="1.6" fill="#f3a9a0" opacity="0.55"/><ellipse cx="33.5" cy="36.5" rx="1.2" ry="0.8" fill="#e9b3a3"/><ellipse cx="33.5" cy="40.7" rx="3.4" ry="1.7" fill="#df8f7d"/></g></svg>
</body></html>
